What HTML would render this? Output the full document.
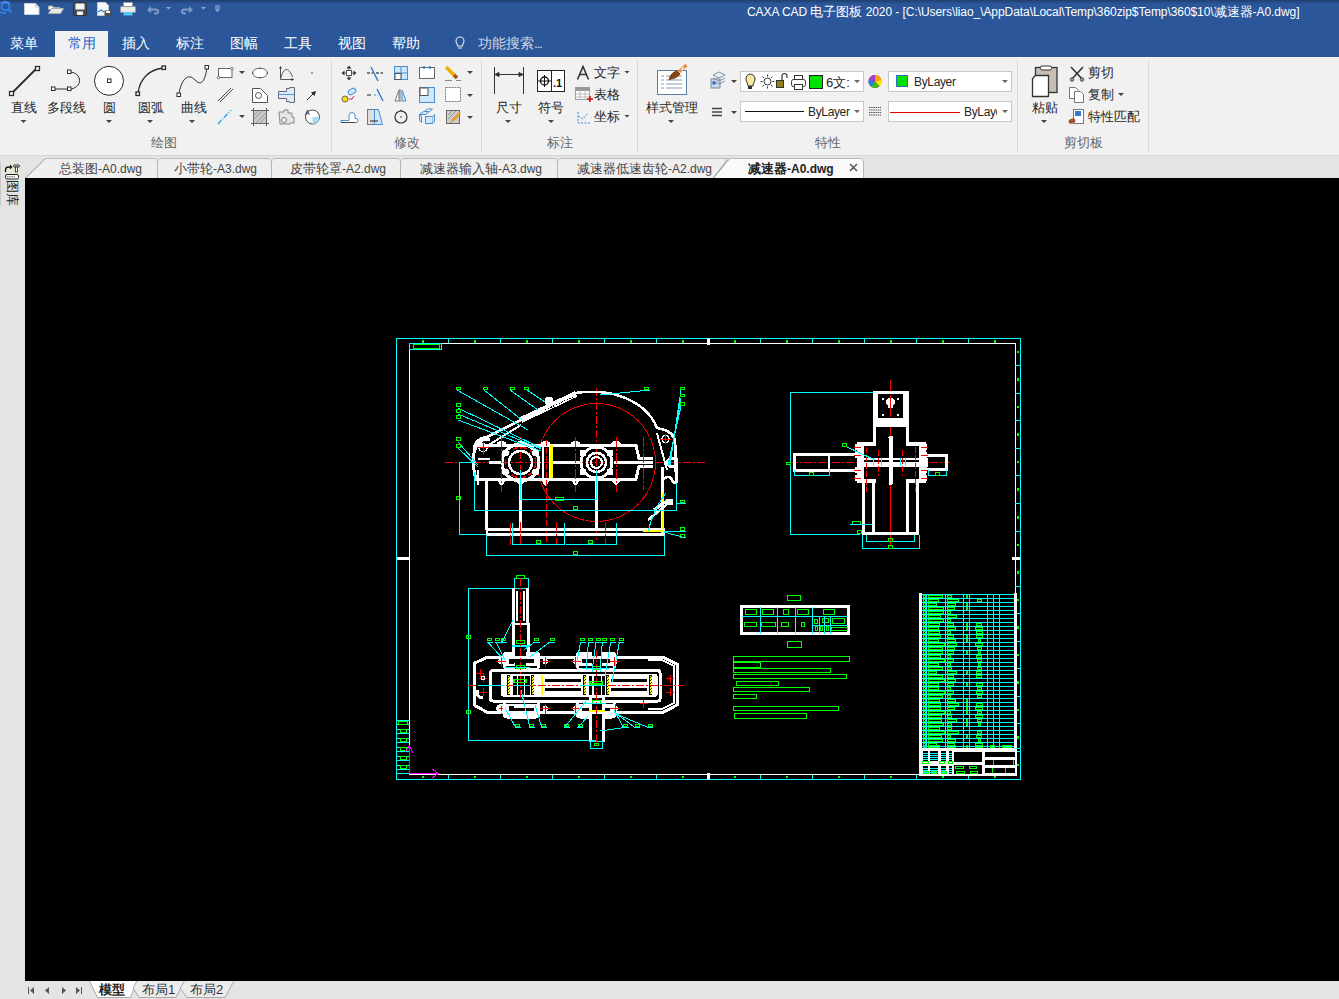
<!DOCTYPE html>
<html><head><meta charset="utf-8">
<style>
*{margin:0;padding:0;box-sizing:border-box}
html,body{width:1339px;height:999px;overflow:hidden;background:#f0f0f0;font-family:"Liberation Sans",sans-serif;}
.a{position:absolute;white-space:nowrap}
#title{left:0;top:0;width:1339px;height:57px;background:#2b579a}
.tt{color:#fff;font-size:13px;line-height:16px}
.tt .l{letter-spacing:-0.07px}
.rt{color:#fff;font-size:13.5px;line-height:16px}
#ribbon{left:0;top:57px;width:1339px;height:98px;background:#f1f1f1}
.lbl{color:#262626;font-size:13px;line-height:15px}
.glbl{color:#666;font-size:13px;line-height:15px}
.sep{width:1px;background:#d9d9d9;top:60px;height:92px}
.dd{width:0;height:0;border-left:3px solid transparent;border-right:3px solid transparent;border-top:3px solid #444}
#tabrow{left:0;top:155px;width:1339px;height:23px;background:#e4e4e4}
#left{left:0;top:178px;width:25px;height:821px;background:#e4e4e4}
#canvas{left:25px;top:178px;width:1314px;height:803px;background:#000}
#bottom{left:25px;top:981px;width:1314px;height:18px;background:#e4e4e4}
.by{font-size:12px;letter-spacing:-0.35px}
.l{font-size:12px}
.tab{color:#444;font-size:13px;line-height:15px}
</style></head><body>
<div id="title" class="a"></div>
<div class="a" style="left:0;top:0;width:1339px;height:4px;background:linear-gradient(#1f3f6e,rgba(43,87,154,0))"></div>
<div class="a tt" style="left:747px;top:4px"><span class="l">CAXA CAD </span>电子图板<span class="l"> 2020 - [C:\Users\liao_\AppData\Local\Temp\360zip$Temp\360$10\</span>减速器<span class="l">-A0.dwg]</span></div>

<svg class="a" style="left:0;top:0" width="560" height="57" viewBox="0 0 560 57">
 <g>
  <circle cx="5.5" cy="6.5" r="4" fill="none" stroke="#2f7fe8" stroke-width="2"/>
  <path d="M8.5,9.5 l3,3" stroke="#2f7fe8" stroke-width="2"/>
  <path d="M0,3 q5,-3 10,0 M0,12 q3,2 6,1" stroke="#4aa0ff" stroke-width="1" fill="none"/>
 </g>
 <path d="M24.5,3.5 h11 l3.5,3.5 v7.5 h-14.5z" fill="#fff" stroke="#c8ccd4"/>
 <path d="M35.5,3.5 v3.5 h3.5" fill="#d8dbe0" stroke="#c8ccd4"/>
 <path d="M48.5,6 h4 l1,1.5 h6 v2 h-11z" fill="#f4f4f4" stroke="#aaa"/>
 <path d="M48.5,13.5 l3,-5 h12 l-3,5z" fill="#e8e8e8" stroke="#aaa"/>
 <rect x="73.5" y="2.5" width="13" height="13" rx="1.5" fill="#4a4f57" stroke="#333"/>
 <rect x="75.5" y="3.5" width="9" height="6" fill="#f4f4f4"/>
 <rect x="77" y="11.5" width="6" height="3.5" fill="#f4f4f4"/>
 <path d="M97.5,2.5 h8 l3,3 v10 h-11z" fill="#f4f6f8" stroke="#c8ccd4"/>
 <path d="M98,12 l3,-2 l3,2" stroke="#3b7fd0" fill="none" stroke-width="1.2"/>
 <rect x="104.5" y="10.5" width="7" height="6" fill="#4a4f57"/>
 <rect x="106" y="11" width="4" height="2" fill="#f4f4f4"/>
 <rect x="123.5" y="2.5" width="9" height="4" fill="#fff" stroke="#999"/>
 <rect x="120.5" y="6.5" width="15" height="6" rx="1" fill="#e8e8e8" stroke="#999"/>
 <rect x="123.5" y="12" width="9" height="3.5" fill="#55c8f0"/>
 <path d="M147,10 l4,-4 v2.5 h5 a3,3 0 0 1 0,6 h-2 v-2 h2 a1,1 0 0 0 0,-2 h-5 v2.5z" fill="#7f9cc8"/>
 <path d="M166,7 h5 l-2.5,2.5z M201,7 h5 l-2.5,2.5z" fill="#8fa6c8"/>
 <path d="M193,10 l-4,-4 v2.5 h-5 a3,3 0 0 0 0,6 h2 v-2 h-2 a1,1 0 0 1 0,-2 h5 v2.5z" fill="#7f9cc8"/>
 <path d="M215,6 h5 M215,8 h5" stroke="#a8b8d0"/><path d="M215,9.5 h5 l-2.5,2.5z" fill="#a8b8d0"/>
 <path d="M460,37 a4,4 0 0 1 4,4 c0,2 -1.5,3 -1.5,5 h-5 c0,-2 -1.5,-3 -1.5,-5 a4,4 0 0 1 4,-4z" fill="none" stroke="#dfe6f0" stroke-width="1.1"/>
 <path d="M458,48 h4" stroke="#dfe6f0" stroke-width="1.1"/>
</svg>
<!-- ribbon tabs -->
<div class="a" style="left:55px;top:31px;width:53px;height:26px;background:#f1f1f1"></div>
<div class="a rt" style="left:10px;top:36px">菜单</div>
<div class="a rt" style="left:68px;top:36px;color:#1f63c6">常用</div>
<div class="a rt" style="left:122px;top:36px">插入</div>
<div class="a rt" style="left:176px;top:36px">标注</div>
<div class="a rt" style="left:230px;top:36px">图幅</div>
<div class="a rt" style="left:284px;top:36px">工具</div>
<div class="a rt" style="left:338px;top:36px">视图</div>
<div class="a rt" style="left:392px;top:36px">帮助</div>
<div class="a rt" style="left:478px;top:36px;color:#cfd6e3">功能搜索<span style="letter-spacing:-1.3px">...</span></div>

<div id="ribbon" class="a"></div>
<div class="a" style="left:0;top:155px;width:1339px;height:1px;background:#d4d4d4"></div>
<!-- ribbon content -->
<div class="a sep" style="left:331px"></div>
<div class="a sep" style="left:481px"></div>
<div class="a sep" style="left:637px"></div>
<div class="a sep" style="left:1017px"></div>
<div class="a sep" style="left:1148px"></div>
<svg class="a" style="left:0;top:0" width="1339" height="155" viewBox="0 0 1339 155">
<g fill="#fff" stroke="#2b2b2b" stroke-width="1">
 <!-- line -->
 <line x1="12" y1="93" x2="36" y2="69" stroke-width="1.8"/>
 <rect x="9.5" y="91.5" width="4" height="4" stroke-width="1.3"/>
 <rect x="35.5" y="66.5" width="4" height="4" stroke-width="1.3"/>
 <!-- polyline -->
 <line x1="54" y1="89" x2="68" y2="89"/>
 <path d="M69,72 C83,72 83,89 69,89" fill="none"/>
 <rect x="51.5" y="87" width="3.5" height="3.5"/>
 <rect x="67.5" y="87" width="3.5" height="3.5"/>
 <rect x="67.5" y="70" width="3.5" height="3.5"/>
 <!-- circle -->
 <circle cx="109" cy="80.8" r="14.5"/>
 <rect x="107.5" y="79" width="3.5" height="3.5"/>
 <!-- arc -->
 <path d="M138,93 C140,78 150,69 164,68" fill="none" stroke-width="1.3"/>
 <rect x="136" y="92" width="3.5" height="3.5" stroke-width="1.3"/>
 <rect x="162" y="66" width="3.5" height="3.5" stroke-width="1.3"/>
 <!-- spline -->
 <path d="M179,94 C181,80 188,72 195,80 C202,87 205,80 207,68" fill="none"/>
 <rect x="177" y="93" width="3.5" height="3.5"/>
 <rect x="205" y="65.5" width="3.5" height="3.5"/>
</g>
<g fill="#444">
 <path d="M20.5,120 h6 l-3,3z M106,120 h6 l-3,3z M147,120 h6 l-3,3z M189,120 h6 l-3,3z"/>
 <path d="M239,71 h6 l-3,3z M239,115 h6 l-3,3z"/>
</g>
<!-- small draw icons -->
<g fill="#fff" stroke="#555" stroke-width="1">
 <rect x="218.5" y="68.5" width="13.5" height="9" stroke="#666"/>
 <circle cx="218.5" cy="77.5" r="1.3" stroke="#555" stroke-width="0.8"/>
 <circle cx="232" cy="68.5" r="1.3" stroke="#555" stroke-width="0.8"/>
 <ellipse cx="260" cy="73" rx="7.5" ry="4.8" stroke="#666"/>
 <path d="M252.5,73 h1 M266.5,73 h1 M260,68 v1 M260,77 v1" stroke="#333" stroke-width="1.2"/>
 <path d="M280.5,67 v12.5 h13" fill="none" stroke="#555"/>
 <path d="M280.5,66 l-1.5,2.5 h3z M294,79.5 l-2.5,-1.5 v3z" fill="#333" stroke="none"/>
 <path d="M280.5,79 C282,73 284,69.5 286.5,69.5 C289,69.5 291,73 292.5,77" fill="none" stroke="#555"/>
 <circle cx="312" cy="73" r="0.8" fill="#333" stroke="none"/>
 <path d="M218,101 L231,88 M220,102 L233,89" stroke="#444" fill="none"/>
 <path d="M252.5,88.5 h8 l7,7 v7 h-15z"/>
 <circle cx="258.5" cy="95.5" r="3"/>
 <path d="M278.5,91.5 h8 v-3 h3 v-1 h5 v15 h-5 v-1 h-3 v-3 h-8z" fill="#dfeaf5" stroke="#667"/>
 <line x1="278" y1="94.5" x2="294" y2="94.5" stroke="#4a9de0"/>
 <path d="M307,100 L314,93" stroke="#333"/>
 <path d="M316,91 l-5,1.5 l3.5,3.5z" fill="#222" stroke="none"/>
 <path d="M218,124 L231,110" stroke="#3aa9e8" stroke-width="1.5" stroke-dasharray="5 1.5 1 1.5"/>
 <rect x="253.5" y="110.5" width="13" height="13" fill="#c8c8c8" stroke="#666"/>
 <path d="M251,110.5 h2 M251,123.5 h2 M267,110.5 h2 M267,123.5 h2 M253.5,108 v2 M266.5,108 v2 M253.5,124 v2 M266.5,124 v2" stroke="#555"/>
 <path d="M254,115 l4,-4 M254,119 l8,-8 M256,123 l10,-10 M260,123 l6,-6" stroke="#999"/>
 <path d="M279,112 h5 v-2 h4 v3 h4 v4 h2 v6 h-4 v1 h-10z" fill="#e4e6ec" stroke="#888"/>
 <circle cx="284" cy="120" r="2.5" fill="#fff" stroke="#777"/>
 <circle cx="312.5" cy="117" r="7" fill="#fff" stroke="#444"/>
 <path d="M312.5,117 h7 a7,7 0 0 1 -7,7z" fill="#a8d8f4" stroke="none"/>
 <text x="305" y="115" font-size="7" fill="#222" stroke="none" font-family="Liberation Sans">A</text>
</g>
<!-- modify icons -->
<g stroke="#444" fill="none">
 <path d="M343,73 h12 M349,67 v12" stroke="#666"/>
 <path d="M341.5,73 l3,-2.5 v5z M356.5,73 l-3,-2.5 v5z M349,65.5 l-2.5,3 h5z M349,80.5 l-2.5,-3 h5z" fill="#333" stroke="none"/>
 <rect x="346.5" y="70.5" width="5" height="5" fill="#fff" stroke="#555"/>
 <path d="M367,73 h6 M376,73 h7" stroke="#555" stroke-width="1.5" stroke-dasharray="3 1.5"/>
 <path d="M371,67 L378,81" stroke="#1f6fc8" stroke-width="1.3"/>
 <rect x="394.5" y="66.5" width="13" height="13" fill="#cde8fb" stroke="#4a90d0"/>
 <path d="M401,66 v14 M394,73 h14" stroke="#4a90d0"/>
 <rect x="395" y="73.5" width="6" height="6" fill="#fff" stroke="#555"/>
 <rect x="419.5" y="67.5" width="15" height="11" fill="#fff" stroke="#666"/>
 <circle cx="424" cy="67.5" r="1.2" fill="#1f6fc8" stroke="none"/>
 <circle cx="430" cy="67.5" r="1.2" fill="#1f6fc8" stroke="none"/>
 <path d="M446,67 L456,77" stroke="#f0b000" stroke-width="3.5"/>
 <path d="M454,75 l3,3" stroke="#a0522d" stroke-width="3.5"/>
 <path d="M445,80.5 h7 M456,80.5 h5" stroke="#888"/>
 <path d="M467,71 h6 l-3,3z" fill="#444" stroke="none"/>
 <circle cx="345" cy="99" r="3" fill="#ffe000" stroke="#666"/>
 <rect x="348" y="89" width="8" height="5" rx="2.5" fill="#cde8fb" stroke="#4a90d0" transform="rotate(-30 352 91.5)"/>
 <path d="M349,99 h3 l2,-3" stroke="#c03030"/>
 <path d="M367,95 h4" stroke="#666" stroke-width="1.5"/>
 <path d="M374,95 h4" stroke="#4a90d0" stroke-width="1.2" stroke-dasharray="2 1.5"/>
 <path d="M377,89 L383,101" stroke="#1f6fc8" stroke-width="1.3"/>
 <path d="M400,89 v13 M399,90 l-4,11 h4z" fill="#fff" stroke="#777"/>
 <path d="M402,90 l4,11 h-4z" fill="#cde8fb" stroke="#4a90d0"/>
 <rect x="419.5" y="87.5" width="15" height="15" fill="#cde8fb" stroke="#4a90d0"/>
 <rect x="420" y="88" width="8" height="7.5" fill="#fff" stroke="#555"/>
 <rect x="445.5" y="87.5" width="15" height="14" fill="#fff" stroke="#777" stroke-dasharray="2 1"/>
 <path d="M467,94 h6 l-3,3z" fill="#444" stroke="none"/>
 <path d="M341,120.5 h8 v-5 a3,3 0 0 1 6,0 v3 h1 a2,2 0 0 1 0,4 h-15z" fill="#fff" stroke="#4a90d0"/>
 <path d="M341,122.5 h14" stroke="#444"/>
 <rect x="367.5" y="109.5" width="7" height="15" fill="#ddd" stroke="#777"/>
 <path d="M374.5,109.5 h4 l4,15 h-8z" fill="#cde8fb" stroke="#4a90d0"/>
 <path d="M370,121 h8" stroke="#222"/>
 <circle cx="401" cy="117" r="6" stroke="#333" stroke-width="1.2"/>
 <circle cx="401" cy="117" r="0.8" fill="#333" stroke="none"/>
 <path d="M400,110 l3,1.5" stroke="#333"/>
 <path d="M419.5,114.5 l4,-3 h6 l-4,3z M419.5,114.5 v6 l2,2 v-6z M425.5,114.5 h-6" fill="#cde8fb" stroke="#4a90d0"/>
 <path d="M424.5,111.5 l3,-2.5 h5 l-3,2.5z" fill="#fff" stroke="#4a90d0"/>
 <rect x="425.5" y="116.5" width="7" height="7" fill="#cde8fb" stroke="#4a90d0"/>
 <path d="M432.5,116.5 l2,-2 v7 l-2,2" fill="#cde8fb" stroke="#4a90d0"/>
 <rect x="446.5" y="110.5" width="13" height="13" fill="#ccc" stroke="#666"/>
 <path d="M448,115 l4,-4 M448,119 l8,-8 M450,123 l9,-9" stroke="#999"/>
 <path d="M452,121 L460,113" stroke="#e89a20" stroke-width="2.5"/>
 <path d="M467,116 h6 l-3,3z" fill="#444" stroke="none"/>
</g>
<!-- dim icons -->
<g stroke="#333" fill="none">
 <path d="M494.5,67 v27 M523.5,67 v27 M495,74.5 h28" stroke="#333"/>
 <path d="M495,74.5 l4,-2 v4z M523,74.5 l-4,-2 v4z" fill="#333"/>
 <rect x="537.5" y="70.5" width="27" height="21" fill="#fff" stroke="#222"/>
 <path d="M551.5,70.5 v21" stroke="#222"/>
 <circle cx="544.5" cy="81" r="4" stroke="#111" stroke-width="1.3"/>
 <path d="M538,81 h13 M544.5,75 v12" stroke="#111"/>
 <text x="553" y="86.5" font-size="11" font-weight="bold" fill="#111" stroke="none" font-family="Liberation Sans">.1</text>
 <path d="M577.5,79.5 L583,66.5 L588.5,79.5 M579.5,74.5 h7" stroke="#333" stroke-width="1.6" fill="none"/>
 <path d="M624.5,71 h5 l-2.5,2.5z M624.5,115 h5 l-2.5,2.5z" fill="#444" stroke="none"/>
 <rect x="575.5" y="87.5" width="14" height="12" fill="#fff" stroke="#999"/>
 <rect x="575.5" y="87.5" width="14" height="3" fill="#999" stroke="#999"/>
 <path d="M575,94 h15 M575,97 h15 M580,90 v10 M585,90 v10" stroke="#bbb"/>
 <path d="M587,99 h6 M590,96 v6" stroke="#d01010" stroke-width="1.6"/>
 <path d="M578,112 v11 h12 M578,116 l5,3 l5,-6" stroke="#3a8ad8" stroke-dasharray="2 1.5"/>
 <rect x="657.5" y="70.5" width="29" height="24" fill="#fff" stroke="#5a7da8"/>
 <path d="M661,76 h3 M661,80 h3 M661,84 h3 M661,88 h3 M666,76 h16 M666,80 h16 M666,84 h16 M666,88 h16" stroke="#8a9ab0"/>
 <path d="M669,79.5 C670,75 673,72 677,71 L680,74 C678,77 674,79 669,79.5z" fill="#8b4513" stroke="#6b3410" stroke-width="0.8"/>
 <path d="M679,72 L686.5,65" stroke="#e8903a" stroke-width="3.2"/>
 <path d="M681.5,70 L684,67.5" stroke="#f0e0d0" stroke-width="2.2"/>
</g>
<g fill="#444"><path d="M505,120 h6 l-3,3z M548,120 h6 l-3,3z M668,120 h6 l-3,3z"/></g>
<!-- property group -->
<g>
 <rect x="711" y="79" width="9" height="9" fill="#cfd8e8" stroke="#7a8aa8"/>
 <path d="M713,75 l6,-3 l6,3 l-6,3z M713,78 l6,3 l6,-3 M713,81 l6,3 l6,-3" fill="none" stroke="#8090a8"/>
 <circle cx="714" cy="83" r="1.8" fill="#3070c0"/>
 <path d="M731,80 h6 l-3,3z M731,111 h6 l-3,3z" fill="#444"/>
 <rect x="740.5" y="71.5" width="123" height="20" fill="#fff" stroke="#c8c8c8"/>
 <rect x="888.5" y="71.5" width="123" height="20" fill="#fff" stroke="#c8c8c8"/>
 <rect x="740.5" y="101.5" width="123" height="20" fill="#fff" stroke="#c8c8c8"/>
 <rect x="888.5" y="101.5" width="123" height="20" fill="#fff" stroke="#c8c8c8"/>
 <path d="M854,80 h6 l-3,3z M1002,80 h6 l-3,3z M854,110 h6 l-3,3z M1002,110 h6 l-3,3z" fill="#666"/>
 <path d="M750,74 a5,5 0 0 1 5,5 c0,3 -2,4 -2,7 h-5 c0,-3 -2,-4 -2,-7 a5,5 0 0 1 4,-5z" fill="#f8e7a0" stroke="#333"/>
 <rect x="748" y="86" width="4" height="3" fill="#333"/>
 <circle cx="767.5" cy="81.5" r="3.5" fill="#fff" stroke="#333"/>
 <path d="M767.5,74.5 v2 M767.5,86.5 v2 M760.5,81.5 h2 M772.5,81.5 h2 M762.5,76.5 l1.5,1.5 M771,85 l1.5,1.5 M762.5,86.5 l1.5,-1.5 M771,78 l1.5,-1.5" stroke="#333"/>
 <rect x="776" y="80" width="8" height="8" fill="#333"/>
 <path d="M777,82 h6 M777,84 h6 M777,86 h6" stroke="#f0d000"/>
 <path d="M782,80 v-4 a2.5,2.5 0 0 1 5,0 v2" fill="none" stroke="#333" stroke-width="1.2"/>
 <rect x="791.5" y="79.5" width="14" height="7" rx="2" fill="#fff" stroke="#333"/>
 <rect x="794.5" y="75.5" width="8" height="4" fill="#fff" stroke="#333"/>
 <rect x="794.5" y="84.5" width="8" height="5" fill="#fff" stroke="#333"/>
 <rect x="809.5" y="75.5" width="13" height="13" fill="#00e000" stroke="#222"/>
 <circle cx="875" cy="81.5" r="6.5" fill="#f00"/>
 <path d="M875,81.5 L875,75 A6.5,6.5 0 0 1 881.2,79.5z" fill="#ff9f00"/>
 <path d="M875,81.5 L881.2,79.5 A6.5,6.5 0 0 1 879.5,86.2z" fill="#ffe800"/>
 <path d="M875,81.5 L879.5,86.2 A6.5,6.5 0 0 1 870.5,86.2z" fill="#30c030"/>
 <path d="M875,81.5 L870.5,86.2 A6.5,6.5 0 0 1 868.8,79.5z" fill="#2080f0"/>
 <path d="M875,81.5 L868.8,79.5 A6.5,6.5 0 0 1 875,75z" fill="#a040d0"/>
 <rect x="896.5" y="75.5" width="11" height="11" fill="#00e000" stroke="#3070c0"/>
 <path d="M712,108.5 h10 M712,112 h10 M712,115.5 h10" stroke="#444" stroke-width="1.3"/>
 <path d="M745,111.5 h59" stroke="#111" stroke-width="1.2"/>
 <path d="M869,107.5 h12 M869,110 h12 M869,112.5 h12 M869,115 h12" stroke="#555" stroke-dasharray="1.5 0.7"/>
 <path d="M890,112.5 h70" stroke="#e00000" stroke-width="1"/>
</g>
<!-- clipboard -->
<g>
 <rect x="1035.5" y="67.5" width="21.5" height="25" fill="#c8bfb4" stroke="#333" stroke-width="1.3"/>
 <rect x="1040.5" y="66" width="11" height="4" rx="1.5" fill="#fff" stroke="#333"/>
 <path d="M1035.5,75.5 h13 v21 h-16 v-18z" fill="#fff" stroke="#333" stroke-width="1.3"/>
 <path d="M1041,120 h6 l-3,3z M1118,93 h6 l-3,3z" fill="#444"/>
 <path d="M1071,67 L1083,80 M1083,67 L1071,80" stroke="#333" stroke-width="1.6"/>
 <circle cx="1072" cy="79.5" r="1.8" fill="#999" stroke="#555"/>
 <circle cx="1082" cy="79.5" r="1.8" fill="#999" stroke="#555"/>
 <path d="M1069.5,87.5 h6 l3,3 v8 h-9z" fill="#fff" stroke="#777"/>
 <path d="M1074.5,91.5 h6 l3,3 v8 h-9z" fill="#fff" stroke="#777"/>
 <rect x="1073.5" y="109.5" width="10" height="14" fill="#fff" stroke="#777"/>
 <rect x="1075" y="111" width="6" height="5" fill="#3a7ad0"/>
 <ellipse cx="1072" cy="121" rx="3.5" ry="2.5" fill="#a0522d" transform="rotate(-20 1072 121)"/>
</g>
</svg>
<div class="a lbl" style="left:11px;top:100px">直线</div>
<div class="a lbl" style="left:47px;top:100px">多段线</div>
<div class="a lbl" style="left:102.5px;top:100px">圆</div>
<div class="a lbl" style="left:138px;top:100px">圆弧</div>
<div class="a lbl" style="left:180.5px;top:100px">曲线</div>
<div class="a glbl" style="left:151px;top:135px">绘图</div>
<div class="a glbl" style="left:394px;top:135px">修改</div>
<div class="a lbl" style="left:495.5px;top:100px">尺寸</div>
<div class="a lbl" style="left:537.5px;top:100px">符号</div>
<div class="a lbl" style="left:594px;top:65px">文字</div>
<div class="a lbl" style="left:594px;top:87px">表格</div>
<div class="a lbl" style="left:594px;top:109px">坐标</div>
<div class="a glbl" style="left:547px;top:135px">标注</div>
<div class="a lbl" style="left:645.5px;top:100px">样式管理</div>
<div class="a lbl" style="left:826px;top:74.5px;font-size:13px">6文:</div>
<div class="a lbl by" style="left:914px;top:74.5px">ByLayer</div>
<div class="a lbl by" style="left:808px;top:104.5px">ByLayer</div>
<div class="a lbl by" style="left:964px;top:104.5px;width:33px;overflow:hidden">ByLayer</div>
<div class="a glbl" style="left:815px;top:135px">特性</div>
<div class="a lbl" style="left:1031.5px;top:100px">粘贴</div>
<div class="a lbl" style="left:1088px;top:65px">剪切</div>
<div class="a lbl" style="left:1088px;top:87px">复制</div>
<div class="a lbl" style="left:1088px;top:109px">特性匹配</div>
<div class="a glbl" style="left:1064px;top:135px">剪切板</div>


<div id="tabrow" class="a"></div>
<div id="left" class="a"></div>
<div id="canvas" class="a"></div>
<div id="bottom" class="a"></div>
<!--DRAWING-->
<svg class="a" style="left:0;top:0" width="1339" height="999" viewBox="0 0 1339 999" shape-rendering="crispEdges">
<rect x="396.5" y="338.5" width="624" height="441" stroke="#00ffff" stroke-width="1" fill="none" />
<rect x="409.5" y="343.5" width="606" height="431" stroke="#ffffff" stroke-width="1.3" fill="none" />
<rect x="409.5" y="343.5" width="31.5" height="6" stroke="#00ffff" stroke-width="1" fill="none" />
<rect x="413.5" y="344.5" width="26" height="4" stroke="#00ff00" stroke-width="1.3" fill="none" />
<line x1="448.5" y1="339" x2="448.5" y2="343" stroke="#00ffff" stroke-width="1" />
<line x1="448.5" y1="775" x2="448.5" y2="779" stroke="#00ffff" stroke-width="1" />
<line x1="500.5" y1="339" x2="500.5" y2="343" stroke="#00ffff" stroke-width="1" />
<line x1="500.5" y1="775" x2="500.5" y2="779" stroke="#00ffff" stroke-width="1" />
<line x1="552.5" y1="339" x2="552.5" y2="343" stroke="#00ffff" stroke-width="1" />
<line x1="552.5" y1="775" x2="552.5" y2="779" stroke="#00ffff" stroke-width="1" />
<line x1="604.5" y1="339" x2="604.5" y2="343" stroke="#00ffff" stroke-width="1" />
<line x1="604.5" y1="775" x2="604.5" y2="779" stroke="#00ffff" stroke-width="1" />
<line x1="656.5" y1="339" x2="656.5" y2="343" stroke="#00ffff" stroke-width="1" />
<line x1="656.5" y1="775" x2="656.5" y2="779" stroke="#00ffff" stroke-width="1" />
<rect x="707" y="338" width="3" height="7" fill="#ffffff"/>
<rect x="707" y="773" width="3" height="7" fill="#ffffff"/>
<line x1="760.5" y1="339" x2="760.5" y2="343" stroke="#00ffff" stroke-width="1" />
<line x1="760.5" y1="775" x2="760.5" y2="779" stroke="#00ffff" stroke-width="1" />
<line x1="812.5" y1="339" x2="812.5" y2="343" stroke="#00ffff" stroke-width="1" />
<line x1="812.5" y1="775" x2="812.5" y2="779" stroke="#00ffff" stroke-width="1" />
<line x1="864.5" y1="339" x2="864.5" y2="343" stroke="#00ffff" stroke-width="1" />
<line x1="864.5" y1="775" x2="864.5" y2="779" stroke="#00ffff" stroke-width="1" />
<line x1="916.5" y1="339" x2="916.5" y2="343" stroke="#00ffff" stroke-width="1" />
<line x1="916.5" y1="775" x2="916.5" y2="779" stroke="#00ffff" stroke-width="1" />
<line x1="968.5" y1="339" x2="968.5" y2="343" stroke="#00ffff" stroke-width="1" />
<line x1="968.5" y1="775" x2="968.5" y2="779" stroke="#00ffff" stroke-width="1" />
<rect x="422.0" y="340" width="1.5" height="2.5" fill="#00ff00"/>
<rect x="422.0" y="775.5" width="1.5" height="2.5" fill="#00ff00"/>
<rect x="474.0" y="340" width="1.5" height="2.5" fill="#00ff00"/>
<rect x="474.0" y="775.5" width="1.5" height="2.5" fill="#00ff00"/>
<rect x="526.0" y="340" width="1.5" height="2.5" fill="#00ff00"/>
<rect x="526.0" y="775.5" width="1.5" height="2.5" fill="#00ff00"/>
<rect x="578.0" y="340" width="1.5" height="2.5" fill="#00ff00"/>
<rect x="578.0" y="775.5" width="1.5" height="2.5" fill="#00ff00"/>
<rect x="630.0" y="340" width="1.5" height="2.5" fill="#00ff00"/>
<rect x="630.0" y="775.5" width="1.5" height="2.5" fill="#00ff00"/>
<rect x="682.0" y="340" width="1.5" height="2.5" fill="#00ff00"/>
<rect x="682.0" y="775.5" width="1.5" height="2.5" fill="#00ff00"/>
<rect x="734.0" y="340" width="1.5" height="2.5" fill="#00ff00"/>
<rect x="734.0" y="775.5" width="1.5" height="2.5" fill="#00ff00"/>
<rect x="786.0" y="340" width="1.5" height="2.5" fill="#00ff00"/>
<rect x="786.0" y="775.5" width="1.5" height="2.5" fill="#00ff00"/>
<rect x="838.0" y="340" width="1.5" height="2.5" fill="#00ff00"/>
<rect x="838.0" y="775.5" width="1.5" height="2.5" fill="#00ff00"/>
<rect x="890.0" y="340" width="1.5" height="2.5" fill="#00ff00"/>
<rect x="890.0" y="775.5" width="1.5" height="2.5" fill="#00ff00"/>
<rect x="942.0" y="340" width="1.5" height="2.5" fill="#00ff00"/>
<rect x="942.0" y="775.5" width="1.5" height="2.5" fill="#00ff00"/>
<rect x="994.0" y="340" width="1.5" height="2.5" fill="#00ff00"/>
<rect x="994.0" y="775.5" width="1.5" height="2.5" fill="#00ff00"/>
<line x1="1015" y1="365.7" x2="1020" y2="365.7" stroke="#00ffff" stroke-width="1" />
<line x1="1015" y1="393.25" x2="1020" y2="393.25" stroke="#00ffff" stroke-width="1" />
<line x1="1015" y1="420.8" x2="1020" y2="420.8" stroke="#00ffff" stroke-width="1" />
<line x1="1015" y1="448.35" x2="1020" y2="448.35" stroke="#00ffff" stroke-width="1" />
<line x1="1015" y1="475.9" x2="1020" y2="475.9" stroke="#00ffff" stroke-width="1" />
<line x1="1015" y1="503.45" x2="1020" y2="503.45" stroke="#00ffff" stroke-width="1" />
<line x1="1015" y1="531.0" x2="1020" y2="531.0" stroke="#00ffff" stroke-width="1" />
<line x1="1015" y1="586.1" x2="1020" y2="586.1" stroke="#00ffff" stroke-width="1" />
<line x1="1015" y1="613.65" x2="1020" y2="613.65" stroke="#00ffff" stroke-width="1" />
<line x1="1015" y1="641.2" x2="1020" y2="641.2" stroke="#00ffff" stroke-width="1" />
<line x1="1015" y1="668.75" x2="1020" y2="668.75" stroke="#00ffff" stroke-width="1" />
<line x1="1015" y1="696.3" x2="1020" y2="696.3" stroke="#00ffff" stroke-width="1" />
<line x1="1015" y1="723.85" x2="1020" y2="723.85" stroke="#00ffff" stroke-width="1" />
<line x1="1015" y1="751.4" x2="1020" y2="751.4" stroke="#00ffff" stroke-width="1" />
<rect x="1017" y="350.7" width="1.5" height="2.5" fill="#00ff00"/>
<rect x="1017" y="378.25" width="1.5" height="2.5" fill="#00ff00"/>
<rect x="1017" y="405.8" width="1.5" height="2.5" fill="#00ff00"/>
<rect x="1017" y="433.35" width="1.5" height="2.5" fill="#00ff00"/>
<rect x="1017" y="460.9" width="1.5" height="2.5" fill="#00ff00"/>
<rect x="1017" y="488.45" width="1.5" height="2.5" fill="#00ff00"/>
<rect x="1017" y="516.0" width="1.5" height="2.5" fill="#00ff00"/>
<rect x="1017" y="543.55" width="1.5" height="2.5" fill="#00ff00"/>
<rect x="1017" y="571.1" width="1.5" height="2.5" fill="#00ff00"/>
<rect x="1017" y="598.65" width="1.5" height="2.5" fill="#00ff00"/>
<rect x="1017" y="626.2" width="1.5" height="2.5" fill="#00ff00"/>
<rect x="1017" y="653.75" width="1.5" height="2.5" fill="#00ff00"/>
<rect x="1017" y="681.3" width="1.5" height="2.5" fill="#00ff00"/>
<rect x="1017" y="708.85" width="1.5" height="2.5" fill="#00ff00"/>
<rect x="1017" y="736.4" width="1.5" height="2.5" fill="#00ff00"/>
<rect x="1017" y="763.95" width="1.5" height="2.5" fill="#00ff00"/>
<rect x="1012" y="557" width="8" height="3" fill="#ffffff"/>
<rect x="397" y="557" width="12" height="3" fill="#ffffff"/>
<line x1="397" y1="720.5" x2="409.5" y2="720.5" stroke="#00ffff" stroke-width="1" />
<line x1="397" y1="724.5" x2="409.5" y2="724.5" stroke="#00ffff" stroke-width="1" />
<rect x="398.5" y="721.0" width="9" height="3" stroke="#00ff00" stroke-width="1" fill="none" />
<line x1="397" y1="729.45" x2="409.5" y2="729.45" stroke="#00ffff" stroke-width="1" />
<line x1="397" y1="733.45" x2="409.5" y2="733.45" stroke="#00ffff" stroke-width="1" />
<rect x="400.5" y="729.95" width="6" height="3" stroke="#00ff00" stroke-width="1" fill="none" />
<line x1="397" y1="738.4" x2="409.5" y2="738.4" stroke="#00ffff" stroke-width="1" />
<line x1="397" y1="742.4" x2="409.5" y2="742.4" stroke="#00ffff" stroke-width="1" />
<rect x="400.5" y="738.9" width="6" height="3" stroke="#00ff00" stroke-width="1" fill="none" />
<line x1="397" y1="747.35" x2="409.5" y2="747.35" stroke="#00ffff" stroke-width="1" />
<line x1="397" y1="751.35" x2="409.5" y2="751.35" stroke="#00ffff" stroke-width="1" />
<rect x="400.5" y="747.85" width="6" height="3" stroke="#00ff00" stroke-width="1" fill="none" />
<line x1="397" y1="756.3" x2="409.5" y2="756.3" stroke="#00ffff" stroke-width="1" />
<line x1="397" y1="760.3" x2="409.5" y2="760.3" stroke="#00ffff" stroke-width="1" />
<rect x="400.5" y="756.8" width="6" height="3" stroke="#00ff00" stroke-width="1" fill="none" />
<line x1="397" y1="765.25" x2="409.5" y2="765.25" stroke="#00ffff" stroke-width="1" />
<line x1="397" y1="769.25" x2="409.5" y2="769.25" stroke="#00ffff" stroke-width="1" />
<rect x="400.5" y="765.75" width="6" height="3" stroke="#00ff00" stroke-width="1" fill="none" />
<line x1="397" y1="773.5" x2="409.5" y2="773.5" stroke="#00ffff" stroke-width="1" />
<line x1="409.5" y1="773.5" x2="409.5" y2="747" stroke="#ff00ff" stroke-width="1.2" />
<line x1="409.5" y1="773.5" x2="438" y2="773.5" stroke="#ff00ff" stroke-width="1.2" />
<path d="M405,752 L409.5,746 L413,753" stroke="#ff00ff" stroke-width="1" fill="none" />
<path d="M432,769 L438.5,773.5 L432,778" stroke="#ff00ff" stroke-width="1" fill="none" />
<line x1="445" y1="462.5" x2="706" y2="462.5" stroke="#ff0000" stroke-width="1" stroke-dasharray="8 2 2 2"/>
<line x1="596.5" y1="388" x2="596.5" y2="540" stroke="#ff0000" stroke-width="1" stroke-dasharray="8 2 2 2"/>
<line x1="520.5" y1="437" x2="520.5" y2="545" stroke="#ff0000" stroke-width="1" stroke-dasharray="8 2 2 2"/>
<circle cx="596.5" cy="462.5" r="59" stroke="#ff0000" stroke-width="1" fill="none" stroke-dasharray="14 1"/>
<path d="M474,450 C474,441 480,438 487,437 L519,421 L575,393 C590,391 605,391 620,396 C640,403 652,415 657,428 C666,430 673,432 675,440 L676,460" stroke="#ffffff" stroke-width="2.5" fill="none" />
<path d="M487,446 L521,425" stroke="#ffffff" stroke-width="2" fill="none" />
<line x1="521" y1="420" x2="576" y2="394" stroke="#ffffff" stroke-width="6" />
<circle cx="549" cy="401" r="3.5" stroke="#ffffff" stroke-width="2" fill="#ffffff" />
<line x1="545" y1="410" x2="573" y2="397" stroke="#000" stroke-width="1" stroke-dasharray="1.5 1.5"/>
<polyline points="476,445.5 636,445.5 639,458.5 653,458.5" stroke="#ffffff" stroke-width="3" fill="none" />
<polyline points="476,479 636,479 639,466 653,466" stroke="#ffffff" stroke-width="3" fill="none" />
<ellipse cx="501.5" cy="444" rx="5" ry="3" fill="#ffffff"/>
<path d="M496.5,480 L506.5,480 L501.5,486z" fill="#ffffff"/>
<ellipse cx="545.5" cy="444" rx="5" ry="3" fill="#ffffff"/>
<path d="M540.5,480 L550.5,480 L545.5,486z" fill="#ffffff"/>
<ellipse cx="575.5" cy="444" rx="5" ry="3" fill="#ffffff"/>
<path d="M570.5,480 L580.5,480 L575.5,486z" fill="#ffffff"/>
<ellipse cx="616" cy="444" rx="5" ry="3" fill="#ffffff"/>
<path d="M611,480 L621,480 L616,486z" fill="#ffffff"/>
<line x1="489" y1="462.5" x2="501" y2="462.5" stroke="#ffffff" stroke-width="3" />
<line x1="550" y1="462.5" x2="580" y2="462.5" stroke="#ffffff" stroke-width="3" />
<line x1="614" y1="462.5" x2="653" y2="462.5" stroke="#ffffff" stroke-width="3" />
<path d="M476,480 C473,470 472,455 476,447 C480,440 486,438 490,440" stroke="#ffffff" stroke-width="3" fill="none" />
<circle cx="483" cy="447.5" r="4" stroke="#ffffff" stroke-width="1.5" fill="none" />
<line x1="477" y1="447.5" x2="489" y2="447.5" stroke="#ff0000" stroke-width="1" />
<line x1="483" y1="441" x2="483" y2="454" stroke="#ff0000" stroke-width="1" />
<line x1="478" y1="459" x2="490" y2="459" stroke="#ffffff" stroke-width="2" />
<path d="M657,428 C668,430 675,434 675,445 L676,480" stroke="#ffffff" stroke-width="2.5" fill="none" />
<circle cx="665.5" cy="439" r="3.5" stroke="#ffffff" stroke-width="1.5" fill="none" />
<line x1="660" y1="439" x2="671" y2="439" stroke="#ff0000" stroke-width="1" />
<line x1="665.5" y1="434" x2="665.5" y2="444" stroke="#ff0000" stroke-width="1" />
<path d="M657,433 C660,445 663,455 667,470" stroke="#ffffff" stroke-width="2" fill="none" />
<circle cx="672" cy="462.5" r="4.5" stroke="#ffffff" stroke-width="3" fill="none" />
<path d="M663,480 C666,476 670,476 672,480 C674,484 676,484 677,480" stroke="#ffffff" stroke-width="2.5" fill="none" />
<circle cx="520.5" cy="462.5" r="18.5" stroke="#ffffff" stroke-width="3" fill="none" />
<circle cx="520.5" cy="462.5" r="11.5" stroke="#ffffff" stroke-width="2.5" fill="none" />
<circle cx="520.5" cy="462.5" r="15.2" stroke="#ff0000" stroke-width="1.5" fill="none" stroke-dasharray="6 3"/>
<circle cx="505.5" cy="453" r="2.5" stroke="#ffffff" stroke-width="2" fill="#ffffff" />
<circle cx="535.5" cy="453" r="2.5" stroke="#ffffff" stroke-width="2" fill="#ffffff" />
<circle cx="505.5" cy="472" r="2.5" stroke="#ffffff" stroke-width="2" fill="#ffffff" />
<circle cx="535.5" cy="472" r="2.5" stroke="#ffffff" stroke-width="2" fill="#ffffff" />
<circle cx="520.5" cy="444" r="2.5" stroke="#ffffff" stroke-width="2" fill="#ffffff" />
<circle cx="520.5" cy="481" r="2.5" stroke="#ffffff" stroke-width="2" fill="#ffffff" />
<circle cx="596.5" cy="462.5" r="15.5" stroke="#ffffff" stroke-width="3" fill="none" />
<circle cx="596.5" cy="462.5" r="9.5" stroke="#ffffff" stroke-width="2.5" fill="none" />
<circle cx="596.5" cy="462.5" r="5.5" stroke="#ffffff" stroke-width="2" fill="none" />
<circle cx="583" cy="453" r="2.5" stroke="#ffffff" stroke-width="2" fill="#ffffff" />
<circle cx="610" cy="453" r="2.5" stroke="#ffffff" stroke-width="2" fill="#ffffff" />
<circle cx="583" cy="472" r="2.5" stroke="#ffffff" stroke-width="2" fill="#ffffff" />
<circle cx="610" cy="472" r="2.5" stroke="#ffffff" stroke-width="2" fill="#ffffff" />
<line x1="543" y1="445" x2="543" y2="480" stroke="#ffffff" stroke-width="2" />
<line x1="550" y1="445" x2="550" y2="480" stroke="#ffffff" stroke-width="2" />
<line x1="546.5" y1="440" x2="546.5" y2="545" stroke="#ff0000" stroke-width="1" stroke-dasharray="6 2"/>
<line x1="486.5" y1="480" x2="486.5" y2="530" stroke="#ffffff" stroke-width="3" />
<line x1="520.5" y1="480" x2="520.5" y2="530" stroke="#ffffff" stroke-width="3" />
<line x1="596.5" y1="480" x2="596.5" y2="530" stroke="#ffffff" stroke-width="3" />
<line x1="662.5" y1="467" x2="662.5" y2="533" stroke="#ffffff" stroke-width="3" />
<line x1="676.5" y1="458" x2="676.5" y2="483" stroke="#ffffff" stroke-width="2.5" />
<line x1="486" y1="529.5" x2="665" y2="529.5" stroke="#ffffff" stroke-width="3" />
<line x1="486" y1="534.5" x2="665" y2="534.5" stroke="#ffffff" stroke-width="3" />
<line x1="486.5" y1="529" x2="486.5" y2="535" stroke="#ffffff" stroke-width="2" />
<line x1="501.5" y1="437" x2="501.5" y2="492" stroke="#ff0000" stroke-width="1" stroke-dasharray="10 2 2 2"/>
<line x1="575.5" y1="437" x2="575.5" y2="492" stroke="#ff0000" stroke-width="1" stroke-dasharray="10 2 2 2"/>
<line x1="616" y1="437" x2="616" y2="492" stroke="#ff0000" stroke-width="1" stroke-dasharray="10 2 2 2"/>
<line x1="643" y1="437" x2="643" y2="490" stroke="#ff0000" stroke-width="1" stroke-dasharray="10 2 2 2"/>
<line x1="510" y1="523" x2="510" y2="545" stroke="#ff0000" stroke-width="1" stroke-dasharray="10 2 2 2"/>
<line x1="556" y1="522" x2="556" y2="545" stroke="#ff0000" stroke-width="1" stroke-dasharray="10 2 2 2"/>
<line x1="605" y1="522" x2="605" y2="545" stroke="#ff0000" stroke-width="1" stroke-dasharray="10 2 2 2"/>
<line x1="520.5" y1="522" x2="520.5" y2="545" stroke="#ff0000" stroke-width="1" stroke-dasharray="10 2 2 2"/>
<rect x="550" y="445" width="3" height="33" fill="#ffff00"/>
<rect x="662" y="493" width="2" height="36" fill="#ffff00"/>
<rect x="643" y="530" width="20" height="2" fill="#ffff00"/>
<path d="M478,470 L478,485 M474,480 L490,480" stroke="#ffffff" stroke-width="1.5" fill="none" />
<path d="M648,520 L672,500" stroke="#ffffff" stroke-width="2.5" fill="none" />
<circle cx="670" cy="502" r="3.5" stroke="#ffffff" stroke-width="0" fill="#ffffff" />
<line x1="654" y1="510" x2="668" y2="500" stroke="#ffffff" stroke-width="3" />
<line x1="457" y1="390" x2="528" y2="430" stroke="#00ffff" stroke-width="1" />
<line x1="484" y1="390" x2="522" y2="420" stroke="#00ffff" stroke-width="1" />
<line x1="510" y1="390" x2="538" y2="410" stroke="#00ffff" stroke-width="1" />
<line x1="527" y1="390" x2="545" y2="402" stroke="#00ffff" stroke-width="1" />
<line x1="458" y1="408" x2="541" y2="448" stroke="#00ffff" stroke-width="1" />
<line x1="458" y1="414" x2="541" y2="449" stroke="#00ffff" stroke-width="1" />
<line x1="458" y1="420" x2="541" y2="451" stroke="#00ffff" stroke-width="1" />
<line x1="458" y1="442" x2="478" y2="465" stroke="#00ffff" stroke-width="1" />
<line x1="458" y1="448" x2="478" y2="467" stroke="#00ffff" stroke-width="1" />
<line x1="650" y1="390" x2="600" y2="395" stroke="#00ffff" stroke-width="1" />
<line x1="681" y1="390" x2="670" y2="465" stroke="#00ffff" stroke-width="1" />
<line x1="681" y1="398" x2="669" y2="465" stroke="#00ffff" stroke-width="1" />
<line x1="681" y1="406" x2="668" y2="465" stroke="#00ffff" stroke-width="1" />
<rect x="456.5" y="387.25" width="4" height="2.5" stroke="#00ff00" stroke-width="1" fill="none" />
<rect x="483.5" y="387.25" width="4" height="2.5" stroke="#00ff00" stroke-width="1" fill="none" />
<rect x="510.0" y="387.25" width="4" height="2.5" stroke="#00ff00" stroke-width="1" fill="none" />
<rect x="524.5" y="387.25" width="4" height="2.5" stroke="#00ff00" stroke-width="1" fill="none" />
<rect x="456.5" y="403.75" width="4" height="2.5" stroke="#00ff00" stroke-width="1" fill="none" />
<rect x="456.5" y="409.75" width="4" height="2.5" stroke="#00ff00" stroke-width="1" fill="none" />
<rect x="456.5" y="415.75" width="4" height="2.5" stroke="#00ff00" stroke-width="1" fill="none" />
<rect x="456.5" y="437.75" width="4" height="2.5" stroke="#00ff00" stroke-width="1" fill="none" />
<rect x="456.5" y="444.75" width="4" height="2.5" stroke="#00ff00" stroke-width="1" fill="none" />
<rect x="644.0" y="387.25" width="4" height="2.5" stroke="#00ff00" stroke-width="1" fill="none" />
<rect x="680.5" y="387.25" width="4" height="2.5" stroke="#00ff00" stroke-width="1" fill="none" />
<rect x="680.5" y="394.25" width="4" height="2.5" stroke="#00ff00" stroke-width="1" fill="none" />
<rect x="680.5" y="402.75" width="4" height="2.5" stroke="#00ff00" stroke-width="1" fill="none" />
<polyline points="474,462.5 459,462.5 459,534.5 486,534.5" stroke="#00ffff" stroke-width="1" fill="none" />
<rect x="456.0" y="496.75" width="4" height="2.5" stroke="#00ff00" stroke-width="1" fill="none" />
<polyline points="474,472 474,510.5 676,510.5 676,485" stroke="#00ffff" stroke-width="1" fill="none" />
<rect x="573.0" y="506.75" width="4" height="2.5" stroke="#00ff00" stroke-width="1" fill="none" />
<polyline points="520.5,470 520.5,499.5 596.5,499.5 596.5,470" stroke="#00ffff" stroke-width="1" fill="none" />
<rect x="555" y="497" width="8" height="3" stroke="#00ff00" stroke-width="1" fill="none" />
<polyline points="512,523 512,544.5 564,544.5 564,523" stroke="#00ffff" stroke-width="1" fill="none" />
<rect x="536.0" y="540.75" width="4" height="2.5" stroke="#00ff00" stroke-width="1" fill="none" />
<polyline points="566,544.5 616,544.5 616,523" stroke="#00ffff" stroke-width="1" fill="none" />
<rect x="588.0" y="540.75" width="4" height="2.5" stroke="#00ff00" stroke-width="1" fill="none" />
<polyline points="486,535 486,555.5 664,555.5 664,535" stroke="#00ffff" stroke-width="1" fill="none" />
<rect x="573.0" y="551.75" width="4" height="2.5" stroke="#00ff00" stroke-width="1" fill="none" />
<path d="M648,531 C652,515 660,500 666,493" stroke="#00ffff" stroke-width="1" fill="none" />
<rect x="680.5" y="500.25" width="4" height="2.5" stroke="#00ff00" stroke-width="1" fill="none" />
<rect x="680.5" y="527.75" width="4" height="2.5" stroke="#00ff00" stroke-width="1" fill="none" />
<rect x="680.5" y="534.75" width="4" height="2.5" stroke="#00ff00" stroke-width="1" fill="none" />
<line x1="664" y1="531" x2="686" y2="531" stroke="#00ffff" stroke-width="1" />
<line x1="664" y1="532" x2="686" y2="538" stroke="#00ffff" stroke-width="1" />
<line x1="676" y1="503" x2="686" y2="503" stroke="#00ffff" stroke-width="1" />
<line x1="676.5" y1="483" x2="676.5" y2="510" stroke="#00ffff" stroke-width="1" />
<line x1="890.5" y1="380" x2="890.5" y2="545" stroke="#ff0000" stroke-width="1" />
<line x1="790" y1="462.5" x2="950" y2="462.5" stroke="#ff0000" stroke-width="1" stroke-dasharray="8 2 2 2"/>
<polyline points="890,392.5 790,392.5 790,534 860,534" stroke="#00ffff" stroke-width="1" fill="none" />
<rect x="872.5" y="391" width="36.5" height="36" fill="#ffffff"/>
<rect x="878" y="394" width="25" height="24" fill="#000"/>
<circle cx="890.5" cy="402" r="4.5" stroke="#ffffff" stroke-width="0" fill="#ffffff" />
<rect x="888" y="402" width="5" height="5.5" fill="#ffffff"/>
<rect x="882.0" y="398.0" width="1.5" height="1.5" fill="#ffffff"/>
<rect x="897.0" y="398.0" width="1.5" height="1.5" fill="#ffffff"/>
<rect x="882.0" y="414.0" width="1.5" height="1.5" fill="#ffffff"/>
<rect x="897.0" y="414.0" width="1.5" height="1.5" fill="#ffffff"/>
<line x1="890.5" y1="395" x2="890.5" y2="417" stroke="#ff0000" stroke-width="1" />
<rect x="872.5" y="426" width="3" height="19" fill="#ffffff"/>
<rect x="906" y="426" width="3" height="19" fill="#ffffff"/>
<rect x="856.5" y="442" width="19" height="4" fill="#ffffff"/>
<rect x="906" y="442" width="19.5" height="4" fill="#ffffff"/>
<rect x="856.5" y="442" width="7" height="41" fill="#ffffff"/>
<rect x="918.5" y="442" width="7" height="41" fill="#ffffff"/>
<ellipse cx="856.5" cy="447" rx="2" ry="3" fill="#ffffff"/>
<ellipse cx="925.5" cy="447" rx="2" ry="3" fill="#ffffff"/>
<ellipse cx="856.5" cy="455" rx="2" ry="3" fill="#ffffff"/>
<ellipse cx="925.5" cy="455" rx="2" ry="3" fill="#ffffff"/>
<ellipse cx="856.5" cy="470" rx="2" ry="3" fill="#ffffff"/>
<ellipse cx="925.5" cy="470" rx="2" ry="3" fill="#ffffff"/>
<ellipse cx="856.5" cy="478" rx="2" ry="3" fill="#ffffff"/>
<ellipse cx="925.5" cy="478" rx="2" ry="3" fill="#ffffff"/>
<rect x="856.5" y="479" width="19" height="3.5" fill="#ffffff"/>
<rect x="906" y="479" width="19.5" height="3.5" fill="#ffffff"/>
<rect x="863" y="457.5" width="56" height="2.5" fill="#ffffff"/>
<rect x="863" y="462" width="56" height="5" fill="#ffffff"/>
<rect x="888.5" y="437.5" width="4.5" height="46" fill="#ffffff"/>
<ellipse cx="890.7" cy="437.5" rx="2.2" ry="2" fill="#ffffff"/><ellipse cx="890.7" cy="483" rx="2.2" ry="2" fill="#ffffff"/>
<rect x="793" y="453.3" width="63" height="3" fill="#ffffff"/>
<rect x="793" y="468.5" width="63" height="3" fill="#ffffff"/>
<rect x="793" y="453.3" width="3" height="18.2" fill="#ffffff"/>
<rect x="828" y="456" width="2" height="13" fill="#ffffff"/>
<rect x="925" y="454" width="22" height="2.5" fill="#ffffff"/>
<rect x="925" y="468" width="22" height="2.5" fill="#ffffff"/>
<rect x="945" y="454" width="2.5" height="16.5" fill="#ffffff"/>
<rect x="926" y="458" width="2" height="9" fill="#ffffff"/>
<rect x="862" y="482" width="3" height="52" fill="#ffffff"/>
<rect x="871.5" y="482" width="3" height="52" fill="#ffffff"/>
<rect x="906" y="482" width="3" height="52" fill="#ffffff"/>
<rect x="915.5" y="482" width="3" height="52" fill="#ffffff"/>
<rect x="862" y="532" width="57" height="3" fill="#ffffff"/>
<line x1="854" y1="447" x2="861" y2="447" stroke="#ff0000" stroke-width="1" />
<line x1="921" y1="447" x2="928" y2="447" stroke="#ff0000" stroke-width="1" />
<line x1="854" y1="455" x2="861" y2="455" stroke="#ff0000" stroke-width="1" />
<line x1="921" y1="455" x2="928" y2="455" stroke="#ff0000" stroke-width="1" />
<line x1="854" y1="470" x2="861" y2="470" stroke="#ff0000" stroke-width="1" />
<line x1="921" y1="470" x2="928" y2="470" stroke="#ff0000" stroke-width="1" />
<line x1="854" y1="478" x2="861" y2="478" stroke="#ff0000" stroke-width="1" />
<line x1="921" y1="478" x2="928" y2="478" stroke="#ff0000" stroke-width="1" />
<line x1="866.5" y1="447" x2="866.5" y2="492" stroke="#ff0000" stroke-width="1" stroke-dasharray="6 2"/>
<line x1="878" y1="450" x2="878" y2="476" stroke="#ff0000" stroke-width="1" stroke-dasharray="6 2"/>
<line x1="902.5" y1="450" x2="902.5" y2="476" stroke="#ff0000" stroke-width="1" stroke-dasharray="6 2"/>
<line x1="915" y1="447" x2="915" y2="492" stroke="#ff0000" stroke-width="1" stroke-dasharray="6 2"/>
<polyline points="866,535 866,541 914,541 914,535" stroke="#00ffff" stroke-width="1" fill="none" />
<polyline points="862,535 862,548.5 919,548.5 919,535" stroke="#00ffff" stroke-width="1" fill="none" />
<rect x="888.5" y="538.75" width="4" height="2.5" stroke="#00ff00" stroke-width="1" fill="none" />
<rect x="888.5" y="545.75" width="4" height="2.5" stroke="#00ff00" stroke-width="1" fill="none" />
<polyline points="794,470 794,475 829.5,475 829.5,470" stroke="#00ffff" stroke-width="1" fill="none" />
<rect x="809.0" y="472.75" width="4" height="2.5" stroke="#00ff00" stroke-width="1" fill="none" />
<polyline points="928,470 928,475 946,475 946,470" stroke="#00ffff" stroke-width="1" fill="none" />
<rect x="935.0" y="472.75" width="4" height="2.5" stroke="#00ff00" stroke-width="1" fill="none" />
<line x1="873" y1="458" x2="873" y2="466" stroke="#00ffff" stroke-width="1" />
<line x1="881" y1="458" x2="881" y2="466" stroke="#00ffff" stroke-width="1" />
<line x1="900" y1="458" x2="900" y2="466" stroke="#00ffff" stroke-width="1" />
<line x1="905" y1="458" x2="905" y2="466" stroke="#00ffff" stroke-width="1" />
<rect x="786.0" y="462.25" width="4" height="2.5" stroke="#00ff00" stroke-width="1" fill="none" />
<rect x="842.5" y="443.75" width="4" height="2.5" stroke="#00ff00" stroke-width="1" fill="none" />
<line x1="847" y1="447" x2="875" y2="460" stroke="#00ffff" stroke-width="1" />
<rect x="852" y="521" width="8" height="3" stroke="#00ff00" stroke-width="1" fill="none" />
<line x1="850" y1="524" x2="872" y2="524" stroke="#00ffff" stroke-width="1" />
<rect x="857.0" y="530.75" width="4" height="2.5" stroke="#00ff00" stroke-width="1" fill="none" />
<polyline points="520,588.5 468.5,588.5 468.5,740 596,740" stroke="#00ffff" stroke-width="1" fill="none" />
<rect x="466.5" y="635.75" width="4" height="2.5" stroke="#00ff00" stroke-width="1" fill="none" />
<rect x="466.5" y="710.75" width="4" height="2.5" stroke="#00ff00" stroke-width="1" fill="none" />
<rect x="514" y="578" width="14" height="10" stroke="#00ffff" stroke-width="1" fill="none" />
<rect x="516" y="575.5" width="8" height="3" stroke="#00ff00" stroke-width="1" fill="none" />
<rect x="512.3" y="588" width="2.7" height="36" fill="#ffffff"/>
<rect x="525.8" y="588" width="2.7" height="36" fill="#ffffff"/>
<rect x="511.5" y="624" width="3" height="46" fill="#ffffff"/>
<rect x="527" y="624" width="3" height="46" fill="#ffffff"/>
<rect x="516" y="591" width="1.5" height="30" fill="#ffffff"/>
<rect x="523" y="591" width="1.5" height="30" fill="#ffffff"/>
<rect x="512" y="623" width="18" height="2" fill="#ffffff"/>
<rect x="512" y="645" width="18" height="1.5" fill="#00ffff"/>
<rect x="503" y="651.5" width="37" height="18" rx="4" fill="#ffffff"/>
<rect x="503" y="700.5" width="37" height="18" rx="4" fill="#ffffff"/>
<rect x="509" y="659" width="25" height="3.5" fill="#000"/>
<rect x="509" y="707.5" width="25" height="3.5" fill="#000"/>
<rect x="506" y="666" width="31" height="2" fill="#000"/>
<rect x="506" y="702" width="31" height="2" fill="#000"/>
<rect x="576" y="651.5" width="40" height="18" rx="4" fill="#ffffff"/>
<rect x="576" y="700.5" width="40" height="18" rx="4" fill="#ffffff"/>
<rect x="582" y="659" width="28" height="3.5" fill="#000"/>
<rect x="582" y="707.5" width="28" height="3.5" fill="#000"/>
<rect x="579" y="666" width="34" height="2" fill="#000"/>
<rect x="579" y="702" width="34" height="2" fill="#000"/>
<rect x="515" y="652" width="11" height="18" fill="#000"/>
<rect x="592" y="700" width="10" height="19" fill="#000"/>
<rect x="592" y="652" width="10" height="18" fill="#000"/>
<polygon points="486.6,657.5 663.7,657.5 677,664.3 677,705 663.7,712 486.6,712 474,705 474,663.4" stroke="#ffffff" stroke-width="3" fill="none" />
<polyline points="648,660 662,660 674,666 674,703 662,709 648,709" stroke="#ffffff" stroke-width="1.5" fill="none" />
<rect x="509" y="660" width="5" height="4" fill="#000"/>
<rect x="509" y="706" width="5" height="4" fill="#000"/>
<rect x="490.5" y="670.5" width="169.5" height="30.5" rx="2" fill="none" stroke="#ffffff" stroke-width="3"/>
<rect x="501" y="673.5" width="156.5" height="23" rx="2" fill="#ffffff"/>
<rect x="545" y="679.2" width="36" height="2.8" fill="#000"/>
<rect x="545" y="688.2" width="36" height="2.8" fill="#000"/>
<rect x="611" y="679.2" width="36" height="2.8" fill="#000"/>
<rect x="611" y="688.2" width="36" height="2.8" fill="#000"/>
<rect x="512.5" y="675.5" width="17" height="19.5" fill="#000"/>
<rect x="516.5" y="676" width="1.5" height="19" fill="#ffffff"/>
<rect x="523.5" y="676" width="1.5" height="19" fill="#ffffff"/>
<rect x="589" y="675.5" width="16" height="19.5" fill="#000"/>
<rect x="592" y="676" width="1.5" height="19" fill="#ffffff"/>
<rect x="600.5" y="676" width="1.5" height="19" fill="#ffffff"/>
<rect x="507.2" y="675" width="3" height="20" fill="#000"/>
<rect x="507.7" y="676" width="2" height="18" fill="#ffff00"/>
<line x1="507.2" y1="678.5" x2="510.2" y2="676" stroke="#000" stroke-width="0.8" />
<line x1="507.2" y1="681.5" x2="510.2" y2="679" stroke="#000" stroke-width="0.8" />
<line x1="507.2" y1="684.5" x2="510.2" y2="682" stroke="#000" stroke-width="0.8" />
<line x1="507.2" y1="687.5" x2="510.2" y2="685" stroke="#000" stroke-width="0.8" />
<line x1="507.2" y1="690.5" x2="510.2" y2="688" stroke="#000" stroke-width="0.8" />
<line x1="507.2" y1="693.5" x2="510.2" y2="691" stroke="#000" stroke-width="0.8" />
<rect x="531.1" y="675" width="3" height="20" fill="#000"/>
<rect x="531.6" y="676" width="2" height="18" fill="#ffff00"/>
<line x1="531.1" y1="678.5" x2="534.1" y2="676" stroke="#000" stroke-width="0.8" />
<line x1="531.1" y1="681.5" x2="534.1" y2="679" stroke="#000" stroke-width="0.8" />
<line x1="531.1" y1="684.5" x2="534.1" y2="682" stroke="#000" stroke-width="0.8" />
<line x1="531.1" y1="687.5" x2="534.1" y2="685" stroke="#000" stroke-width="0.8" />
<line x1="531.1" y1="690.5" x2="534.1" y2="688" stroke="#000" stroke-width="0.8" />
<line x1="531.1" y1="693.5" x2="534.1" y2="691" stroke="#000" stroke-width="0.8" />
<rect x="583.0" y="675" width="3" height="20" fill="#000"/>
<rect x="583.5" y="676" width="2" height="18" fill="#ffff00"/>
<line x1="583.0" y1="678.5" x2="586.0" y2="676" stroke="#000" stroke-width="0.8" />
<line x1="583.0" y1="681.5" x2="586.0" y2="679" stroke="#000" stroke-width="0.8" />
<line x1="583.0" y1="684.5" x2="586.0" y2="682" stroke="#000" stroke-width="0.8" />
<line x1="583.0" y1="687.5" x2="586.0" y2="685" stroke="#000" stroke-width="0.8" />
<line x1="583.0" y1="690.5" x2="586.0" y2="688" stroke="#000" stroke-width="0.8" />
<line x1="583.0" y1="693.5" x2="586.0" y2="691" stroke="#000" stroke-width="0.8" />
<rect x="606.0" y="675" width="3" height="20" fill="#000"/>
<rect x="606.5" y="676" width="2" height="18" fill="#ffff00"/>
<line x1="606.0" y1="678.5" x2="609.0" y2="676" stroke="#000" stroke-width="0.8" />
<line x1="606.0" y1="681.5" x2="609.0" y2="679" stroke="#000" stroke-width="0.8" />
<line x1="606.0" y1="684.5" x2="609.0" y2="682" stroke="#000" stroke-width="0.8" />
<line x1="606.0" y1="687.5" x2="609.0" y2="685" stroke="#000" stroke-width="0.8" />
<line x1="606.0" y1="690.5" x2="609.0" y2="688" stroke="#000" stroke-width="0.8" />
<line x1="606.0" y1="693.5" x2="609.0" y2="691" stroke="#000" stroke-width="0.8" />
<rect x="649.0" y="675" width="3" height="20" fill="#000"/>
<rect x="649.5" y="676" width="2" height="18" fill="#ffff00"/>
<line x1="649.0" y1="678.5" x2="652.0" y2="676" stroke="#000" stroke-width="0.8" />
<line x1="649.0" y1="681.5" x2="652.0" y2="679" stroke="#000" stroke-width="0.8" />
<line x1="649.0" y1="684.5" x2="652.0" y2="682" stroke="#000" stroke-width="0.8" />
<line x1="649.0" y1="687.5" x2="652.0" y2="685" stroke="#000" stroke-width="0.8" />
<line x1="649.0" y1="690.5" x2="652.0" y2="688" stroke="#000" stroke-width="0.8" />
<line x1="649.0" y1="693.5" x2="652.0" y2="691" stroke="#000" stroke-width="0.8" />
<rect x="541" y="675" width="2" height="20" fill="#ffff00"/>
<rect x="589" y="696" width="3" height="46" fill="#ffffff"/>
<rect x="602" y="696" width="3" height="46" fill="#ffffff"/>
<rect x="592" y="696" width="10" height="2" fill="#ffffff"/>
<rect x="589" y="710" width="16" height="1.5" fill="#ffff00"/>
<rect x="590" y="741" width="12" height="7" stroke="#00ffff" stroke-width="1" fill="none" />
<rect x="594.0" y="743.25" width="4" height="2.5" stroke="#00ff00" stroke-width="1" fill="none" />
<line x1="520" y1="578" x2="520" y2="700" stroke="#ff0000" stroke-width="1" stroke-dasharray="8 2 2 2"/>
<line x1="596" y1="650" x2="596" y2="745" stroke="#ff0000" stroke-width="1" stroke-dasharray="8 2 2 2"/>
<line x1="468" y1="685.5" x2="684" y2="685.5" stroke="#ff0000" stroke-width="1" stroke-dasharray="8 2 2 2"/>
<circle cx="501" cy="661.6" r="2.2" stroke="#ffffff" stroke-width="1" fill="#ffffff" />
<line x1="496" y1="661.6" x2="506" y2="661.6" stroke="#ff0000" stroke-width="1" />
<line x1="501" y1="656.6" x2="501" y2="666.6" stroke="#ff0000" stroke-width="1" />
<circle cx="545.2" cy="661.6" r="2.2" stroke="#ffffff" stroke-width="1" fill="#ffffff" />
<line x1="540.2" y1="661.6" x2="550.2" y2="661.6" stroke="#ff0000" stroke-width="1" />
<line x1="545.2" y1="656.6" x2="545.2" y2="666.6" stroke="#ff0000" stroke-width="1" />
<circle cx="575.8" cy="661.6" r="2.2" stroke="#ffffff" stroke-width="1" fill="#ffffff" />
<line x1="570.8" y1="661.6" x2="580.8" y2="661.6" stroke="#ff0000" stroke-width="1" />
<line x1="575.8" y1="656.6" x2="575.8" y2="666.6" stroke="#ff0000" stroke-width="1" />
<circle cx="614.5" cy="661.6" r="2.2" stroke="#ffffff" stroke-width="1" fill="#ffffff" />
<line x1="609.5" y1="661.6" x2="619.5" y2="661.6" stroke="#ff0000" stroke-width="1" />
<line x1="614.5" y1="656.6" x2="614.5" y2="666.6" stroke="#ff0000" stroke-width="1" />
<circle cx="501" cy="708.5" r="2.2" stroke="#ffffff" stroke-width="1" fill="#ffffff" />
<line x1="496" y1="708.5" x2="506" y2="708.5" stroke="#ff0000" stroke-width="1" />
<line x1="501" y1="703.5" x2="501" y2="713.5" stroke="#ff0000" stroke-width="1" />
<circle cx="545.2" cy="708.5" r="2.2" stroke="#ffffff" stroke-width="1" fill="#ffffff" />
<line x1="540.2" y1="708.5" x2="550.2" y2="708.5" stroke="#ff0000" stroke-width="1" />
<line x1="545.2" y1="703.5" x2="545.2" y2="713.5" stroke="#ff0000" stroke-width="1" />
<circle cx="575.8" cy="708.5" r="2.2" stroke="#ffffff" stroke-width="1" fill="#ffffff" />
<line x1="570.8" y1="708.5" x2="580.8" y2="708.5" stroke="#ff0000" stroke-width="1" />
<line x1="575.8" y1="703.5" x2="575.8" y2="713.5" stroke="#ff0000" stroke-width="1" />
<circle cx="615" cy="708.5" r="2.2" stroke="#ffffff" stroke-width="1" fill="#ffffff" />
<line x1="610" y1="708.5" x2="620" y2="708.5" stroke="#ff0000" stroke-width="1" />
<line x1="615" y1="703.5" x2="615" y2="713.5" stroke="#ff0000" stroke-width="1" />
<line x1="666" y1="678.5" x2="674" y2="678.5" stroke="#ff0000" stroke-width="1" />
<line x1="670" y1="674.5" x2="670" y2="682.5" stroke="#ff0000" stroke-width="1" />
<line x1="666" y1="692" x2="674" y2="692" stroke="#ff0000" stroke-width="1" />
<line x1="670" y1="688" x2="670" y2="696" stroke="#ff0000" stroke-width="1" />
<line x1="639.5" y1="703.5" x2="647.5" y2="703.5" stroke="#ff0000" stroke-width="1" />
<line x1="643.5" y1="699.5" x2="643.5" y2="707.5" stroke="#ff0000" stroke-width="1" />
<line x1="476" y1="673" x2="484" y2="673" stroke="#ff0000" stroke-width="1" />
<line x1="480" y1="669" x2="480" y2="677" stroke="#ff0000" stroke-width="1" />
<line x1="479" y1="678" x2="487" y2="678" stroke="#ff0000" stroke-width="1" />
<line x1="483" y1="674" x2="483" y2="682" stroke="#ff0000" stroke-width="1" />
<line x1="479" y1="692" x2="487" y2="692" stroke="#ff0000" stroke-width="1" />
<line x1="483" y1="688" x2="483" y2="696" stroke="#ff0000" stroke-width="1" />
<circle cx="483" cy="678" r="1.8" stroke="#ffffff" stroke-width="1" fill="none" />
<path d="M478,690 C476,694 478,698 483,698" stroke="#ffffff" stroke-width="3" fill="none" />
<circle cx="501" cy="708.5" r="3.5" stroke="#ffffff" stroke-width="2.5" fill="none" />
<rect x="516" y="640" width="8" height="3" stroke="#00ff00" stroke-width="1" fill="none" />
<rect x="516" y="665.5" width="8" height="3" stroke="#00ff00" stroke-width="1" fill="none" />
<rect x="514" y="679.5" width="12" height="3" stroke="#00ff00" stroke-width="1.5" fill="none" />
<rect x="592" y="666" width="8" height="3" stroke="#00ff00" stroke-width="1" fill="none" />
<rect x="590" y="681.5" width="12" height="2.5" stroke="#00ff00" stroke-width="1.5" fill="none" />
<rect x="592" y="700" width="8" height="3" stroke="#00ff00" stroke-width="1" fill="none" />
<line x1="505" y1="667.5" x2="530" y2="667.5" stroke="#00ffff" stroke-width="1" />
<line x1="582" y1="668" x2="609" y2="668" stroke="#00ffff" stroke-width="1" />
<line x1="584" y1="703" x2="606" y2="703" stroke="#00ffff" stroke-width="1" />
<line x1="513" y1="685.5" x2="530" y2="685.5" stroke="#00ffff" stroke-width="1" />
<line x1="580" y1="685.5" x2="606" y2="685.5" stroke="#00ffff" stroke-width="1" />
<rect x="487.7" y="638.25" width="4" height="2.5" stroke="#00ff00" stroke-width="1" fill="none" />
<rect x="495.8" y="638.25" width="4" height="2.5" stroke="#00ff00" stroke-width="1" fill="none" />
<rect x="501.8" y="638.25" width="4" height="2.5" stroke="#00ff00" stroke-width="1" fill="none" />
<rect x="534.5" y="638.25" width="4" height="2.5" stroke="#00ff00" stroke-width="1" fill="none" />
<rect x="550.0" y="638.25" width="4" height="2.5" stroke="#00ff00" stroke-width="1" fill="none" />
<rect x="580.5" y="638.25" width="4" height="2.5" stroke="#00ff00" stroke-width="1" fill="none" />
<rect x="588.5" y="638.25" width="4" height="2.5" stroke="#00ff00" stroke-width="1" fill="none" />
<rect x="596.0" y="638.25" width="4" height="2.5" stroke="#00ff00" stroke-width="1" fill="none" />
<rect x="602.3" y="638.25" width="4" height="2.5" stroke="#00ff00" stroke-width="1" fill="none" />
<rect x="610.7" y="638.25" width="4" height="2.5" stroke="#00ff00" stroke-width="1" fill="none" />
<rect x="619.4" y="638.25" width="4" height="2.5" stroke="#00ff00" stroke-width="1" fill="none" />
<line x1="487.7" y1="642" x2="503" y2="659" stroke="#00ffff" stroke-width="1" />
<line x1="486.7" y1="642" x2="492.7" y2="642" stroke="#00ffff" stroke-width="1" />
<line x1="495.8" y1="642" x2="505" y2="660" stroke="#00ffff" stroke-width="1" />
<line x1="494.8" y1="642" x2="500.8" y2="642" stroke="#00ffff" stroke-width="1" />
<line x1="501.8" y1="642" x2="513" y2="620" stroke="#00ffff" stroke-width="1" />
<line x1="500.8" y1="642" x2="506.8" y2="642" stroke="#00ffff" stroke-width="1" />
<line x1="534.5" y1="642" x2="524" y2="650" stroke="#00ffff" stroke-width="1" />
<line x1="533.5" y1="642" x2="539.5" y2="642" stroke="#00ffff" stroke-width="1" />
<line x1="550" y1="642" x2="530" y2="657" stroke="#00ffff" stroke-width="1" />
<line x1="549" y1="642" x2="555" y2="642" stroke="#00ffff" stroke-width="1" />
<line x1="580.5" y1="642" x2="577" y2="662" stroke="#00ffff" stroke-width="1" />
<line x1="579.5" y1="642" x2="585.5" y2="642" stroke="#00ffff" stroke-width="1" />
<line x1="588.5" y1="642" x2="586" y2="670" stroke="#00ffff" stroke-width="1" />
<line x1="587.5" y1="642" x2="593.5" y2="642" stroke="#00ffff" stroke-width="1" />
<line x1="596" y1="642" x2="592" y2="672" stroke="#00ffff" stroke-width="1" />
<line x1="595" y1="642" x2="601" y2="642" stroke="#00ffff" stroke-width="1" />
<line x1="602.3" y1="642" x2="600" y2="672" stroke="#00ffff" stroke-width="1" />
<line x1="601.3" y1="642" x2="607.3" y2="642" stroke="#00ffff" stroke-width="1" />
<line x1="610.7" y1="642" x2="605" y2="676" stroke="#00ffff" stroke-width="1" />
<line x1="609.7" y1="642" x2="615.7" y2="642" stroke="#00ffff" stroke-width="1" />
<line x1="619.4" y1="642" x2="612" y2="682" stroke="#00ffff" stroke-width="1" />
<line x1="618.4" y1="642" x2="624.4" y2="642" stroke="#00ffff" stroke-width="1" />
<rect x="515.7" y="724.25" width="4" height="2.5" stroke="#00ff00" stroke-width="1" fill="none" />
<rect x="529.9" y="724.25" width="4" height="2.5" stroke="#00ff00" stroke-width="1" fill="none" />
<rect x="541.8" y="724.25" width="4" height="2.5" stroke="#00ff00" stroke-width="1" fill="none" />
<rect x="564.5" y="724.25" width="4" height="2.5" stroke="#00ff00" stroke-width="1" fill="none" />
<rect x="578.0" y="724.25" width="4" height="2.5" stroke="#00ff00" stroke-width="1" fill="none" />
<rect x="623.5" y="724.25" width="4" height="2.5" stroke="#00ff00" stroke-width="1" fill="none" />
<rect x="635.0" y="724.25" width="4" height="2.5" stroke="#00ff00" stroke-width="1" fill="none" />
<rect x="648.4" y="724.25" width="4" height="2.5" stroke="#00ff00" stroke-width="1" fill="none" />
<line x1="515.7" y1="727.5" x2="505" y2="708" stroke="#00ffff" stroke-width="1" />
<line x1="514.7" y1="727.5" x2="520.7" y2="727.5" stroke="#00ffff" stroke-width="1" />
<line x1="529.9" y1="727.5" x2="521" y2="690" stroke="#00ffff" stroke-width="1" />
<line x1="528.9" y1="727.5" x2="534.9" y2="727.5" stroke="#00ffff" stroke-width="1" />
<line x1="541.8" y1="727.5" x2="535" y2="705" stroke="#00ffff" stroke-width="1" />
<line x1="540.8" y1="727.5" x2="546.8" y2="727.5" stroke="#00ffff" stroke-width="1" />
<line x1="564.5" y1="727.5" x2="587" y2="700" stroke="#00ffff" stroke-width="1" />
<line x1="563.5" y1="727.5" x2="569.5" y2="727.5" stroke="#00ffff" stroke-width="1" />
<line x1="578" y1="727.5" x2="588" y2="716" stroke="#00ffff" stroke-width="1" />
<line x1="577" y1="727.5" x2="583" y2="727.5" stroke="#00ffff" stroke-width="1" />
<line x1="623.5" y1="727.5" x2="614" y2="710" stroke="#00ffff" stroke-width="1" />
<line x1="622.5" y1="727.5" x2="628.5" y2="727.5" stroke="#00ffff" stroke-width="1" />
<line x1="635" y1="727.5" x2="614" y2="712" stroke="#00ffff" stroke-width="1" />
<line x1="634" y1="727.5" x2="640" y2="727.5" stroke="#00ffff" stroke-width="1" />
<line x1="648.4" y1="727.5" x2="616" y2="714" stroke="#00ffff" stroke-width="1" />
<line x1="647.4" y1="727.5" x2="653.4" y2="727.5" stroke="#00ffff" stroke-width="1" />
<line x1="600" y1="731" x2="628" y2="727" stroke="#00ffff" stroke-width="1" />
<line x1="478" y1="685" x2="505" y2="685" stroke="#00ffff" stroke-width="1" />
<rect x="787.5" y="595.5" width="13" height="5" stroke="#00ff00" stroke-width="1" fill="none" />
<rect x="741.5" y="606.5" width="107" height="27" stroke="#ffffff" stroke-width="2.5" fill="none" />
<line x1="760.5" y1="607" x2="760.5" y2="634" stroke="#00ffff" stroke-width="1" />
<line x1="777.5" y1="607" x2="777.5" y2="634" stroke="#00ffff" stroke-width="1" />
<line x1="795.5" y1="607" x2="795.5" y2="634" stroke="#00ffff" stroke-width="1" />
<line x1="812.5" y1="607" x2="812.5" y2="634" stroke="#00ffff" stroke-width="1" />
<line x1="742" y1="616.5" x2="848" y2="616.5" stroke="#00ffff" stroke-width="1" />
<rect x="745.5" y="609.5" width="11" height="4.5" stroke="#00ff00" stroke-width="1" fill="none" />
<rect x="762.5" y="609.5" width="11" height="4.5" stroke="#00ff00" stroke-width="1" fill="none" />
<rect x="783" y="609.5" width="5" height="4.5" stroke="#00ff00" stroke-width="1" fill="none" />
<rect x="797.5" y="609.5" width="11" height="4.5" stroke="#00ff00" stroke-width="1" fill="none" />
<rect x="823" y="609.5" width="11" height="4.5" stroke="#00ff00" stroke-width="1" fill="none" />
<rect x="744.5" y="622" width="12" height="4" stroke="#00ff00" stroke-width="1" fill="none" />
<rect x="761.5" y="622" width="14" height="4" stroke="#00ff00" stroke-width="1" fill="none" />
<rect x="781" y="622" width="7" height="4" stroke="#00ff00" stroke-width="1" fill="none" />
<rect x="801" y="622" width="3" height="4" stroke="#00ff00" stroke-width="1" fill="none" />
<rect x="814" y="619" width="3" height="4" stroke="#00ff00" stroke-width="1" fill="none" />
<rect x="822" y="618" width="6" height="4" stroke="#00ff00" stroke-width="1" fill="none" />
<rect x="832" y="618" width="12" height="5" stroke="#00ff00" stroke-width="1" fill="none" />
<rect x="831" y="627" width="16" height="3" stroke="#00ff00" stroke-width="1" fill="none" />
<line x1="819.5" y1="617" x2="819.5" y2="634" stroke="#00ffff" stroke-width="1" />
<line x1="824.5" y1="617" x2="824.5" y2="634" stroke="#00ffff" stroke-width="1" />
<line x1="830.5" y1="617" x2="830.5" y2="634" stroke="#00ffff" stroke-width="1" />
<line x1="812" y1="625.5" x2="848" y2="625.5" stroke="#00ffff" stroke-width="1" />
<rect x="815" y="626" width="2" height="4" stroke="#00ff00" stroke-width="1" fill="none" />
<rect x="820.5" y="626" width="2" height="4" stroke="#00ff00" stroke-width="1" fill="none" />
<rect x="826" y="626" width="2" height="4" stroke="#00ff00" stroke-width="1" fill="none" />
<rect x="787.5" y="641.5" width="14" height="6" stroke="#00ff00" stroke-width="1" fill="none" />
<rect x="733.5" y="656" width="116.0" height="5.5" stroke="#00ff00" stroke-width="1" fill="none" />
<rect x="733.5" y="662.5" width="27.0" height="5.0" stroke="#00ff00" stroke-width="1" fill="none" />
<rect x="733.5" y="668.5" width="97.0" height="4.0" stroke="#00ff00" stroke-width="1" fill="none" />
<rect x="733.5" y="674.5" width="113.0" height="4.0" stroke="#00ff00" stroke-width="1" fill="none" />
<rect x="736.5" y="681.5" width="41.5" height="4.0" stroke="#00ff00" stroke-width="1" fill="none" />
<rect x="733.5" y="687.5" width="76.0" height="4.0" stroke="#00ff00" stroke-width="1" fill="none" />
<rect x="733.5" y="694.5" width="23.0" height="4.0" stroke="#00ff00" stroke-width="1" fill="none" />
<rect x="733.5" y="706.5" width="105.0" height="4.0" stroke="#00ff00" stroke-width="1" fill="none" />
<rect x="734.5" y="713.5" width="72.0" height="5.0" stroke="#00ff00" stroke-width="1" fill="none" />
<rect x="919" y="593" width="3" height="183" fill="#ffffff"/>
<rect x="1014" y="593" width="3" height="183" fill="#ffffff"/>
<rect x="922" y="594" width="92" height="1" fill="#00ffff"/>
<rect x="922" y="598" width="92" height="1" fill="#00ffff"/>
<rect x="922" y="602" width="92" height="1" fill="#00ffff"/>
<rect x="922" y="606" width="92" height="1" fill="#00ffff"/>
<rect x="922" y="610" width="92" height="1" fill="#00ffff"/>
<rect x="922" y="614" width="92" height="1" fill="#00ffff"/>
<rect x="922" y="618" width="92" height="1" fill="#00ffff"/>
<rect x="922" y="622" width="92" height="1" fill="#00ffff"/>
<rect x="922" y="626" width="92" height="1" fill="#00ffff"/>
<rect x="922" y="630" width="92" height="1" fill="#00ffff"/>
<rect x="922" y="634" width="92" height="1" fill="#00ffff"/>
<rect x="922" y="638" width="92" height="1" fill="#00ffff"/>
<rect x="922" y="642" width="92" height="1" fill="#00ffff"/>
<rect x="922" y="646" width="92" height="1" fill="#00ffff"/>
<rect x="922" y="650" width="92" height="1" fill="#00ffff"/>
<rect x="922" y="654" width="92" height="1" fill="#00ffff"/>
<rect x="922" y="658" width="92" height="1" fill="#00ffff"/>
<rect x="922" y="662" width="92" height="1" fill="#00ffff"/>
<rect x="922" y="666" width="92" height="1" fill="#00ffff"/>
<rect x="922" y="670" width="92" height="1" fill="#00ffff"/>
<rect x="922" y="674" width="92" height="1" fill="#00ffff"/>
<rect x="922" y="678" width="92" height="1" fill="#00ffff"/>
<rect x="922" y="682" width="92" height="1" fill="#00ffff"/>
<rect x="922" y="686" width="92" height="1" fill="#00ffff"/>
<rect x="922" y="690" width="92" height="1" fill="#00ffff"/>
<rect x="922" y="694" width="92" height="1" fill="#00ffff"/>
<rect x="922" y="698" width="92" height="1" fill="#00ffff"/>
<rect x="922" y="702" width="92" height="1" fill="#00ffff"/>
<rect x="922" y="706" width="92" height="1" fill="#00ffff"/>
<rect x="922" y="710" width="92" height="1" fill="#00ffff"/>
<rect x="922" y="714" width="92" height="1" fill="#00ffff"/>
<rect x="922" y="718" width="92" height="1" fill="#00ffff"/>
<rect x="922" y="722" width="92" height="1" fill="#00ffff"/>
<rect x="922" y="726" width="92" height="1" fill="#00ffff"/>
<rect x="922" y="730" width="92" height="1" fill="#00ffff"/>
<rect x="922" y="734" width="92" height="1" fill="#00ffff"/>
<rect x="922" y="738" width="92" height="1" fill="#00ffff"/>
<rect x="922" y="742" width="92" height="1" fill="#00ffff"/>
<rect x="922" y="746" width="92" height="1" fill="#00ffff"/>
<rect x="926" y="594" width="1" height="155" fill="#00ffff"/>
<rect x="945" y="594" width="1" height="155" fill="#00ffff"/>
<rect x="963" y="594" width="1" height="155" fill="#00ffff"/>
<rect x="969" y="594" width="1" height="155" fill="#00ffff"/>
<rect x="987" y="594" width="1" height="155" fill="#00ffff"/>
<rect x="993" y="594" width="1" height="155" fill="#00ffff"/>
<rect x="999" y="594" width="1" height="155" fill="#00ffff"/>
<rect x="923" y="595" width="3" height="1" fill="#00ff00"/>
<rect x="923" y="597" width="3" height="1" fill="#00ff00"/>
<rect x="923" y="595" width="1" height="3" fill="#00ff00"/>
<rect x="925" y="595" width="1" height="3" fill="#00ff00"/>
<rect x="928" y="595" width="15" height="1" fill="#00ff00"/>
<rect x="928" y="597" width="15" height="1" fill="#00ff00"/>
<rect x="928" y="595" width="1" height="3" fill="#00ff00"/>
<rect x="942" y="595" width="1" height="3" fill="#00ff00"/>
<rect x="947" y="595" width="5" height="1" fill="#00ff00"/>
<rect x="947" y="597" width="5" height="1" fill="#00ff00"/>
<rect x="947" y="595" width="1" height="3" fill="#00ff00"/>
<rect x="951" y="595" width="1" height="3" fill="#00ff00"/>
<rect x="966" y="595" width="1" height="3" fill="#00ff00"/>
<rect x="967" y="595" width="1" height="3" fill="#00ff00"/>
<rect x="923" y="599" width="3" height="1" fill="#00ff00"/>
<rect x="923" y="601" width="3" height="1" fill="#00ff00"/>
<rect x="923" y="599" width="1" height="3" fill="#00ff00"/>
<rect x="925" y="599" width="1" height="3" fill="#00ff00"/>
<rect x="928" y="599" width="11" height="1" fill="#00ff00"/>
<rect x="928" y="601" width="11" height="1" fill="#00ff00"/>
<rect x="928" y="599" width="1" height="3" fill="#00ff00"/>
<rect x="938" y="599" width="1" height="3" fill="#00ff00"/>
<rect x="947" y="599" width="12" height="1" fill="#00ff00"/>
<rect x="947" y="601" width="12" height="1" fill="#00ff00"/>
<rect x="947" y="599" width="1" height="3" fill="#00ff00"/>
<rect x="958" y="599" width="1" height="3" fill="#00ff00"/>
<rect x="977" y="599" width="5" height="1" fill="#00ff00"/>
<rect x="977" y="601" width="5" height="1" fill="#00ff00"/>
<rect x="977" y="599" width="1" height="3" fill="#00ff00"/>
<rect x="981" y="599" width="1" height="3" fill="#00ff00"/>
<rect x="923" y="603" width="3" height="1" fill="#00ff00"/>
<rect x="923" y="605" width="3" height="1" fill="#00ff00"/>
<rect x="923" y="603" width="1" height="3" fill="#00ff00"/>
<rect x="925" y="603" width="1" height="3" fill="#00ff00"/>
<rect x="928" y="603" width="9" height="1" fill="#00ff00"/>
<rect x="928" y="605" width="9" height="1" fill="#00ff00"/>
<rect x="928" y="603" width="1" height="3" fill="#00ff00"/>
<rect x="936" y="603" width="1" height="3" fill="#00ff00"/>
<rect x="947" y="603" width="9" height="1" fill="#00ff00"/>
<rect x="947" y="605" width="9" height="1" fill="#00ff00"/>
<rect x="947" y="603" width="1" height="3" fill="#00ff00"/>
<rect x="955" y="603" width="1" height="3" fill="#00ff00"/>
<rect x="966" y="603" width="1" height="3" fill="#00ff00"/>
<rect x="967" y="603" width="1" height="3" fill="#00ff00"/>
<rect x="923" y="607" width="3" height="1" fill="#00ff00"/>
<rect x="923" y="609" width="3" height="1" fill="#00ff00"/>
<rect x="923" y="607" width="1" height="3" fill="#00ff00"/>
<rect x="925" y="607" width="1" height="3" fill="#00ff00"/>
<rect x="928" y="607" width="16" height="1" fill="#00ff00"/>
<rect x="928" y="609" width="16" height="1" fill="#00ff00"/>
<rect x="928" y="607" width="1" height="3" fill="#00ff00"/>
<rect x="943" y="607" width="1" height="3" fill="#00ff00"/>
<rect x="947" y="607" width="8" height="1" fill="#00ff00"/>
<rect x="947" y="609" width="8" height="1" fill="#00ff00"/>
<rect x="947" y="607" width="1" height="3" fill="#00ff00"/>
<rect x="954" y="607" width="1" height="3" fill="#00ff00"/>
<rect x="966" y="607" width="1" height="3" fill="#00ff00"/>
<rect x="967" y="607" width="1" height="3" fill="#00ff00"/>
<rect x="923" y="611" width="3" height="1" fill="#00ff00"/>
<rect x="923" y="613" width="3" height="1" fill="#00ff00"/>
<rect x="923" y="611" width="1" height="3" fill="#00ff00"/>
<rect x="925" y="611" width="1" height="3" fill="#00ff00"/>
<rect x="928" y="611" width="16" height="1" fill="#00ff00"/>
<rect x="928" y="613" width="16" height="1" fill="#00ff00"/>
<rect x="928" y="611" width="1" height="3" fill="#00ff00"/>
<rect x="943" y="611" width="1" height="3" fill="#00ff00"/>
<rect x="947" y="611" width="4" height="1" fill="#00ff00"/>
<rect x="947" y="613" width="4" height="1" fill="#00ff00"/>
<rect x="947" y="611" width="1" height="3" fill="#00ff00"/>
<rect x="950" y="611" width="1" height="3" fill="#00ff00"/>
<rect x="923" y="615" width="3" height="1" fill="#00ff00"/>
<rect x="923" y="617" width="3" height="1" fill="#00ff00"/>
<rect x="923" y="615" width="1" height="3" fill="#00ff00"/>
<rect x="925" y="615" width="1" height="3" fill="#00ff00"/>
<rect x="928" y="615" width="13" height="1" fill="#00ff00"/>
<rect x="928" y="617" width="13" height="1" fill="#00ff00"/>
<rect x="928" y="615" width="1" height="3" fill="#00ff00"/>
<rect x="940" y="615" width="1" height="3" fill="#00ff00"/>
<rect x="947" y="615" width="10" height="1" fill="#00ff00"/>
<rect x="947" y="617" width="10" height="1" fill="#00ff00"/>
<rect x="947" y="615" width="1" height="3" fill="#00ff00"/>
<rect x="956" y="615" width="1" height="3" fill="#00ff00"/>
<rect x="923" y="619" width="3" height="1" fill="#00ff00"/>
<rect x="923" y="621" width="3" height="1" fill="#00ff00"/>
<rect x="923" y="619" width="1" height="3" fill="#00ff00"/>
<rect x="925" y="619" width="1" height="3" fill="#00ff00"/>
<rect x="928" y="619" width="16" height="1" fill="#00ff00"/>
<rect x="928" y="621" width="16" height="1" fill="#00ff00"/>
<rect x="928" y="619" width="1" height="3" fill="#00ff00"/>
<rect x="943" y="619" width="1" height="3" fill="#00ff00"/>
<rect x="947" y="619" width="4" height="1" fill="#00ff00"/>
<rect x="947" y="621" width="4" height="1" fill="#00ff00"/>
<rect x="947" y="619" width="1" height="3" fill="#00ff00"/>
<rect x="950" y="619" width="1" height="3" fill="#00ff00"/>
<rect x="923" y="623" width="3" height="1" fill="#00ff00"/>
<rect x="923" y="625" width="3" height="1" fill="#00ff00"/>
<rect x="923" y="623" width="1" height="3" fill="#00ff00"/>
<rect x="925" y="623" width="1" height="3" fill="#00ff00"/>
<rect x="928" y="623" width="12" height="1" fill="#00ff00"/>
<rect x="928" y="625" width="12" height="1" fill="#00ff00"/>
<rect x="928" y="623" width="1" height="3" fill="#00ff00"/>
<rect x="939" y="623" width="1" height="3" fill="#00ff00"/>
<rect x="947" y="623" width="7" height="1" fill="#00ff00"/>
<rect x="947" y="625" width="7" height="1" fill="#00ff00"/>
<rect x="947" y="623" width="1" height="3" fill="#00ff00"/>
<rect x="953" y="623" width="1" height="3" fill="#00ff00"/>
<rect x="966" y="623" width="1" height="3" fill="#00ff00"/>
<rect x="967" y="623" width="1" height="3" fill="#00ff00"/>
<rect x="976" y="623" width="6" height="1" fill="#00ff00"/>
<rect x="976" y="625" width="6" height="1" fill="#00ff00"/>
<rect x="976" y="623" width="1" height="3" fill="#00ff00"/>
<rect x="981" y="623" width="1" height="3" fill="#00ff00"/>
<rect x="923" y="627" width="3" height="1" fill="#00ff00"/>
<rect x="923" y="629" width="3" height="1" fill="#00ff00"/>
<rect x="923" y="627" width="1" height="3" fill="#00ff00"/>
<rect x="925" y="627" width="1" height="3" fill="#00ff00"/>
<rect x="928" y="627" width="11" height="1" fill="#00ff00"/>
<rect x="928" y="629" width="11" height="1" fill="#00ff00"/>
<rect x="928" y="627" width="1" height="3" fill="#00ff00"/>
<rect x="938" y="627" width="1" height="3" fill="#00ff00"/>
<rect x="947" y="627" width="9" height="1" fill="#00ff00"/>
<rect x="947" y="629" width="9" height="1" fill="#00ff00"/>
<rect x="947" y="627" width="1" height="3" fill="#00ff00"/>
<rect x="955" y="627" width="1" height="3" fill="#00ff00"/>
<rect x="966" y="627" width="1" height="3" fill="#00ff00"/>
<rect x="967" y="627" width="1" height="3" fill="#00ff00"/>
<rect x="975" y="627" width="8" height="1" fill="#00ff00"/>
<rect x="975" y="629" width="8" height="1" fill="#00ff00"/>
<rect x="975" y="627" width="1" height="3" fill="#00ff00"/>
<rect x="982" y="627" width="1" height="3" fill="#00ff00"/>
<rect x="923" y="631" width="3" height="1" fill="#00ff00"/>
<rect x="923" y="633" width="3" height="1" fill="#00ff00"/>
<rect x="923" y="631" width="1" height="3" fill="#00ff00"/>
<rect x="925" y="631" width="1" height="3" fill="#00ff00"/>
<rect x="928" y="631" width="12" height="1" fill="#00ff00"/>
<rect x="928" y="633" width="12" height="1" fill="#00ff00"/>
<rect x="928" y="631" width="1" height="3" fill="#00ff00"/>
<rect x="939" y="631" width="1" height="3" fill="#00ff00"/>
<rect x="947" y="631" width="4" height="1" fill="#00ff00"/>
<rect x="947" y="633" width="4" height="1" fill="#00ff00"/>
<rect x="947" y="631" width="1" height="3" fill="#00ff00"/>
<rect x="950" y="631" width="1" height="3" fill="#00ff00"/>
<rect x="976" y="631" width="7" height="1" fill="#00ff00"/>
<rect x="976" y="633" width="7" height="1" fill="#00ff00"/>
<rect x="976" y="631" width="1" height="3" fill="#00ff00"/>
<rect x="982" y="631" width="1" height="3" fill="#00ff00"/>
<rect x="923" y="635" width="3" height="1" fill="#00ff00"/>
<rect x="923" y="637" width="3" height="1" fill="#00ff00"/>
<rect x="923" y="635" width="1" height="3" fill="#00ff00"/>
<rect x="925" y="635" width="1" height="3" fill="#00ff00"/>
<rect x="928" y="635" width="13" height="1" fill="#00ff00"/>
<rect x="928" y="637" width="13" height="1" fill="#00ff00"/>
<rect x="928" y="635" width="1" height="3" fill="#00ff00"/>
<rect x="940" y="635" width="1" height="3" fill="#00ff00"/>
<rect x="947" y="635" width="7" height="1" fill="#00ff00"/>
<rect x="947" y="637" width="7" height="1" fill="#00ff00"/>
<rect x="947" y="635" width="1" height="3" fill="#00ff00"/>
<rect x="953" y="635" width="1" height="3" fill="#00ff00"/>
<rect x="966" y="635" width="1" height="3" fill="#00ff00"/>
<rect x="967" y="635" width="1" height="3" fill="#00ff00"/>
<rect x="976" y="635" width="7" height="1" fill="#00ff00"/>
<rect x="976" y="637" width="7" height="1" fill="#00ff00"/>
<rect x="976" y="635" width="1" height="3" fill="#00ff00"/>
<rect x="982" y="635" width="1" height="3" fill="#00ff00"/>
<rect x="923" y="639" width="3" height="1" fill="#00ff00"/>
<rect x="923" y="641" width="3" height="1" fill="#00ff00"/>
<rect x="923" y="639" width="1" height="3" fill="#00ff00"/>
<rect x="925" y="639" width="1" height="3" fill="#00ff00"/>
<rect x="928" y="639" width="11" height="1" fill="#00ff00"/>
<rect x="928" y="641" width="11" height="1" fill="#00ff00"/>
<rect x="928" y="639" width="1" height="3" fill="#00ff00"/>
<rect x="938" y="639" width="1" height="3" fill="#00ff00"/>
<rect x="947" y="639" width="9" height="1" fill="#00ff00"/>
<rect x="947" y="641" width="9" height="1" fill="#00ff00"/>
<rect x="947" y="639" width="1" height="3" fill="#00ff00"/>
<rect x="955" y="639" width="1" height="3" fill="#00ff00"/>
<rect x="966" y="639" width="1" height="3" fill="#00ff00"/>
<rect x="967" y="639" width="1" height="3" fill="#00ff00"/>
<rect x="978" y="639" width="3" height="1" fill="#00ff00"/>
<rect x="978" y="641" width="3" height="1" fill="#00ff00"/>
<rect x="978" y="639" width="1" height="3" fill="#00ff00"/>
<rect x="980" y="639" width="1" height="3" fill="#00ff00"/>
<rect x="923" y="643" width="3" height="1" fill="#00ff00"/>
<rect x="923" y="645" width="3" height="1" fill="#00ff00"/>
<rect x="923" y="643" width="1" height="3" fill="#00ff00"/>
<rect x="925" y="643" width="1" height="3" fill="#00ff00"/>
<rect x="928" y="643" width="17" height="1" fill="#00ff00"/>
<rect x="928" y="645" width="17" height="1" fill="#00ff00"/>
<rect x="928" y="643" width="1" height="3" fill="#00ff00"/>
<rect x="944" y="643" width="1" height="3" fill="#00ff00"/>
<rect x="947" y="643" width="10" height="1" fill="#00ff00"/>
<rect x="947" y="645" width="10" height="1" fill="#00ff00"/>
<rect x="947" y="643" width="1" height="3" fill="#00ff00"/>
<rect x="956" y="643" width="1" height="3" fill="#00ff00"/>
<rect x="975" y="643" width="8" height="1" fill="#00ff00"/>
<rect x="975" y="645" width="8" height="1" fill="#00ff00"/>
<rect x="975" y="643" width="1" height="3" fill="#00ff00"/>
<rect x="982" y="643" width="1" height="3" fill="#00ff00"/>
<rect x="923" y="647" width="3" height="1" fill="#00ff00"/>
<rect x="923" y="649" width="3" height="1" fill="#00ff00"/>
<rect x="923" y="647" width="1" height="3" fill="#00ff00"/>
<rect x="925" y="647" width="1" height="3" fill="#00ff00"/>
<rect x="928" y="647" width="15" height="1" fill="#00ff00"/>
<rect x="928" y="649" width="15" height="1" fill="#00ff00"/>
<rect x="928" y="647" width="1" height="3" fill="#00ff00"/>
<rect x="942" y="647" width="1" height="3" fill="#00ff00"/>
<rect x="947" y="647" width="8" height="1" fill="#00ff00"/>
<rect x="947" y="649" width="8" height="1" fill="#00ff00"/>
<rect x="947" y="647" width="1" height="3" fill="#00ff00"/>
<rect x="954" y="647" width="1" height="3" fill="#00ff00"/>
<rect x="977" y="647" width="5" height="1" fill="#00ff00"/>
<rect x="977" y="649" width="5" height="1" fill="#00ff00"/>
<rect x="977" y="647" width="1" height="3" fill="#00ff00"/>
<rect x="981" y="647" width="1" height="3" fill="#00ff00"/>
<rect x="923" y="651" width="3" height="1" fill="#00ff00"/>
<rect x="923" y="653" width="3" height="1" fill="#00ff00"/>
<rect x="923" y="651" width="1" height="3" fill="#00ff00"/>
<rect x="925" y="651" width="1" height="3" fill="#00ff00"/>
<rect x="928" y="651" width="15" height="1" fill="#00ff00"/>
<rect x="928" y="653" width="15" height="1" fill="#00ff00"/>
<rect x="928" y="651" width="1" height="3" fill="#00ff00"/>
<rect x="942" y="651" width="1" height="3" fill="#00ff00"/>
<rect x="947" y="651" width="7" height="1" fill="#00ff00"/>
<rect x="947" y="653" width="7" height="1" fill="#00ff00"/>
<rect x="947" y="651" width="1" height="3" fill="#00ff00"/>
<rect x="953" y="651" width="1" height="3" fill="#00ff00"/>
<rect x="966" y="651" width="1" height="3" fill="#00ff00"/>
<rect x="967" y="651" width="1" height="3" fill="#00ff00"/>
<rect x="978" y="651" width="3" height="1" fill="#00ff00"/>
<rect x="978" y="653" width="3" height="1" fill="#00ff00"/>
<rect x="978" y="651" width="1" height="3" fill="#00ff00"/>
<rect x="980" y="651" width="1" height="3" fill="#00ff00"/>
<rect x="923" y="655" width="3" height="1" fill="#00ff00"/>
<rect x="923" y="657" width="3" height="1" fill="#00ff00"/>
<rect x="923" y="655" width="1" height="3" fill="#00ff00"/>
<rect x="925" y="655" width="1" height="3" fill="#00ff00"/>
<rect x="928" y="655" width="13" height="1" fill="#00ff00"/>
<rect x="928" y="657" width="13" height="1" fill="#00ff00"/>
<rect x="928" y="655" width="1" height="3" fill="#00ff00"/>
<rect x="940" y="655" width="1" height="3" fill="#00ff00"/>
<rect x="947" y="655" width="4" height="1" fill="#00ff00"/>
<rect x="947" y="657" width="4" height="1" fill="#00ff00"/>
<rect x="947" y="655" width="1" height="3" fill="#00ff00"/>
<rect x="950" y="655" width="1" height="3" fill="#00ff00"/>
<rect x="976" y="655" width="6" height="1" fill="#00ff00"/>
<rect x="976" y="657" width="6" height="1" fill="#00ff00"/>
<rect x="976" y="655" width="1" height="3" fill="#00ff00"/>
<rect x="981" y="655" width="1" height="3" fill="#00ff00"/>
<rect x="923" y="659" width="3" height="1" fill="#00ff00"/>
<rect x="923" y="661" width="3" height="1" fill="#00ff00"/>
<rect x="923" y="659" width="1" height="3" fill="#00ff00"/>
<rect x="925" y="659" width="1" height="3" fill="#00ff00"/>
<rect x="928" y="659" width="17" height="1" fill="#00ff00"/>
<rect x="928" y="661" width="17" height="1" fill="#00ff00"/>
<rect x="928" y="659" width="1" height="3" fill="#00ff00"/>
<rect x="944" y="659" width="1" height="3" fill="#00ff00"/>
<rect x="947" y="659" width="7" height="1" fill="#00ff00"/>
<rect x="947" y="661" width="7" height="1" fill="#00ff00"/>
<rect x="947" y="659" width="1" height="3" fill="#00ff00"/>
<rect x="953" y="659" width="1" height="3" fill="#00ff00"/>
<rect x="977" y="659" width="5" height="1" fill="#00ff00"/>
<rect x="977" y="661" width="5" height="1" fill="#00ff00"/>
<rect x="977" y="659" width="1" height="3" fill="#00ff00"/>
<rect x="981" y="659" width="1" height="3" fill="#00ff00"/>
<rect x="923" y="663" width="3" height="1" fill="#00ff00"/>
<rect x="923" y="665" width="3" height="1" fill="#00ff00"/>
<rect x="923" y="663" width="1" height="3" fill="#00ff00"/>
<rect x="925" y="663" width="1" height="3" fill="#00ff00"/>
<rect x="928" y="663" width="11" height="1" fill="#00ff00"/>
<rect x="928" y="665" width="11" height="1" fill="#00ff00"/>
<rect x="928" y="663" width="1" height="3" fill="#00ff00"/>
<rect x="938" y="663" width="1" height="3" fill="#00ff00"/>
<rect x="947" y="663" width="4" height="1" fill="#00ff00"/>
<rect x="947" y="665" width="4" height="1" fill="#00ff00"/>
<rect x="947" y="663" width="1" height="3" fill="#00ff00"/>
<rect x="950" y="663" width="1" height="3" fill="#00ff00"/>
<rect x="978" y="663" width="3" height="1" fill="#00ff00"/>
<rect x="978" y="665" width="3" height="1" fill="#00ff00"/>
<rect x="978" y="663" width="1" height="3" fill="#00ff00"/>
<rect x="980" y="663" width="1" height="3" fill="#00ff00"/>
<rect x="923" y="667" width="3" height="1" fill="#00ff00"/>
<rect x="923" y="669" width="3" height="1" fill="#00ff00"/>
<rect x="923" y="667" width="1" height="3" fill="#00ff00"/>
<rect x="925" y="667" width="1" height="3" fill="#00ff00"/>
<rect x="928" y="667" width="15" height="1" fill="#00ff00"/>
<rect x="928" y="669" width="15" height="1" fill="#00ff00"/>
<rect x="928" y="667" width="1" height="3" fill="#00ff00"/>
<rect x="942" y="667" width="1" height="3" fill="#00ff00"/>
<rect x="947" y="667" width="5" height="1" fill="#00ff00"/>
<rect x="947" y="669" width="5" height="1" fill="#00ff00"/>
<rect x="947" y="667" width="1" height="3" fill="#00ff00"/>
<rect x="951" y="667" width="1" height="3" fill="#00ff00"/>
<rect x="977" y="667" width="5" height="1" fill="#00ff00"/>
<rect x="977" y="669" width="5" height="1" fill="#00ff00"/>
<rect x="977" y="667" width="1" height="3" fill="#00ff00"/>
<rect x="981" y="667" width="1" height="3" fill="#00ff00"/>
<rect x="923" y="671" width="3" height="1" fill="#00ff00"/>
<rect x="923" y="673" width="3" height="1" fill="#00ff00"/>
<rect x="923" y="671" width="1" height="3" fill="#00ff00"/>
<rect x="925" y="671" width="1" height="3" fill="#00ff00"/>
<rect x="928" y="671" width="9" height="1" fill="#00ff00"/>
<rect x="928" y="673" width="9" height="1" fill="#00ff00"/>
<rect x="928" y="671" width="1" height="3" fill="#00ff00"/>
<rect x="936" y="671" width="1" height="3" fill="#00ff00"/>
<rect x="947" y="671" width="10" height="1" fill="#00ff00"/>
<rect x="947" y="673" width="10" height="1" fill="#00ff00"/>
<rect x="947" y="671" width="1" height="3" fill="#00ff00"/>
<rect x="956" y="671" width="1" height="3" fill="#00ff00"/>
<rect x="966" y="671" width="1" height="3" fill="#00ff00"/>
<rect x="967" y="671" width="1" height="3" fill="#00ff00"/>
<rect x="976" y="671" width="6" height="1" fill="#00ff00"/>
<rect x="976" y="673" width="6" height="1" fill="#00ff00"/>
<rect x="976" y="671" width="1" height="3" fill="#00ff00"/>
<rect x="981" y="671" width="1" height="3" fill="#00ff00"/>
<rect x="923" y="675" width="3" height="1" fill="#00ff00"/>
<rect x="923" y="677" width="3" height="1" fill="#00ff00"/>
<rect x="923" y="675" width="1" height="3" fill="#00ff00"/>
<rect x="925" y="675" width="1" height="3" fill="#00ff00"/>
<rect x="928" y="675" width="15" height="1" fill="#00ff00"/>
<rect x="928" y="677" width="15" height="1" fill="#00ff00"/>
<rect x="928" y="675" width="1" height="3" fill="#00ff00"/>
<rect x="942" y="675" width="1" height="3" fill="#00ff00"/>
<rect x="947" y="675" width="7" height="1" fill="#00ff00"/>
<rect x="947" y="677" width="7" height="1" fill="#00ff00"/>
<rect x="947" y="675" width="1" height="3" fill="#00ff00"/>
<rect x="953" y="675" width="1" height="3" fill="#00ff00"/>
<rect x="976" y="675" width="6" height="1" fill="#00ff00"/>
<rect x="976" y="677" width="6" height="1" fill="#00ff00"/>
<rect x="976" y="675" width="1" height="3" fill="#00ff00"/>
<rect x="981" y="675" width="1" height="3" fill="#00ff00"/>
<rect x="923" y="679" width="3" height="1" fill="#00ff00"/>
<rect x="923" y="681" width="3" height="1" fill="#00ff00"/>
<rect x="923" y="679" width="1" height="3" fill="#00ff00"/>
<rect x="925" y="679" width="1" height="3" fill="#00ff00"/>
<rect x="928" y="679" width="17" height="1" fill="#00ff00"/>
<rect x="928" y="681" width="17" height="1" fill="#00ff00"/>
<rect x="928" y="679" width="1" height="3" fill="#00ff00"/>
<rect x="944" y="679" width="1" height="3" fill="#00ff00"/>
<rect x="947" y="679" width="9" height="1" fill="#00ff00"/>
<rect x="947" y="681" width="9" height="1" fill="#00ff00"/>
<rect x="947" y="679" width="1" height="3" fill="#00ff00"/>
<rect x="955" y="679" width="1" height="3" fill="#00ff00"/>
<rect x="923" y="683" width="3" height="1" fill="#00ff00"/>
<rect x="923" y="685" width="3" height="1" fill="#00ff00"/>
<rect x="923" y="683" width="1" height="3" fill="#00ff00"/>
<rect x="925" y="683" width="1" height="3" fill="#00ff00"/>
<rect x="928" y="683" width="11" height="1" fill="#00ff00"/>
<rect x="928" y="685" width="11" height="1" fill="#00ff00"/>
<rect x="928" y="683" width="1" height="3" fill="#00ff00"/>
<rect x="938" y="683" width="1" height="3" fill="#00ff00"/>
<rect x="947" y="683" width="7" height="1" fill="#00ff00"/>
<rect x="947" y="685" width="7" height="1" fill="#00ff00"/>
<rect x="947" y="683" width="1" height="3" fill="#00ff00"/>
<rect x="953" y="683" width="1" height="3" fill="#00ff00"/>
<rect x="966" y="683" width="1" height="3" fill="#00ff00"/>
<rect x="967" y="683" width="1" height="3" fill="#00ff00"/>
<rect x="976" y="683" width="7" height="1" fill="#00ff00"/>
<rect x="976" y="685" width="7" height="1" fill="#00ff00"/>
<rect x="976" y="683" width="1" height="3" fill="#00ff00"/>
<rect x="982" y="683" width="1" height="3" fill="#00ff00"/>
<rect x="923" y="687" width="3" height="1" fill="#00ff00"/>
<rect x="923" y="689" width="3" height="1" fill="#00ff00"/>
<rect x="923" y="687" width="1" height="3" fill="#00ff00"/>
<rect x="925" y="687" width="1" height="3" fill="#00ff00"/>
<rect x="928" y="687" width="11" height="1" fill="#00ff00"/>
<rect x="928" y="689" width="11" height="1" fill="#00ff00"/>
<rect x="928" y="687" width="1" height="3" fill="#00ff00"/>
<rect x="938" y="687" width="1" height="3" fill="#00ff00"/>
<rect x="947" y="687" width="4" height="1" fill="#00ff00"/>
<rect x="947" y="689" width="4" height="1" fill="#00ff00"/>
<rect x="947" y="687" width="1" height="3" fill="#00ff00"/>
<rect x="950" y="687" width="1" height="3" fill="#00ff00"/>
<rect x="977" y="687" width="5" height="1" fill="#00ff00"/>
<rect x="977" y="689" width="5" height="1" fill="#00ff00"/>
<rect x="977" y="687" width="1" height="3" fill="#00ff00"/>
<rect x="981" y="687" width="1" height="3" fill="#00ff00"/>
<rect x="923" y="691" width="3" height="1" fill="#00ff00"/>
<rect x="923" y="693" width="3" height="1" fill="#00ff00"/>
<rect x="923" y="691" width="1" height="3" fill="#00ff00"/>
<rect x="925" y="691" width="1" height="3" fill="#00ff00"/>
<rect x="928" y="691" width="17" height="1" fill="#00ff00"/>
<rect x="928" y="693" width="17" height="1" fill="#00ff00"/>
<rect x="928" y="691" width="1" height="3" fill="#00ff00"/>
<rect x="944" y="691" width="1" height="3" fill="#00ff00"/>
<rect x="947" y="691" width="7" height="1" fill="#00ff00"/>
<rect x="947" y="693" width="7" height="1" fill="#00ff00"/>
<rect x="947" y="691" width="1" height="3" fill="#00ff00"/>
<rect x="953" y="691" width="1" height="3" fill="#00ff00"/>
<rect x="976" y="691" width="7" height="1" fill="#00ff00"/>
<rect x="976" y="693" width="7" height="1" fill="#00ff00"/>
<rect x="976" y="691" width="1" height="3" fill="#00ff00"/>
<rect x="982" y="691" width="1" height="3" fill="#00ff00"/>
<rect x="923" y="695" width="3" height="1" fill="#00ff00"/>
<rect x="923" y="697" width="3" height="1" fill="#00ff00"/>
<rect x="923" y="695" width="1" height="3" fill="#00ff00"/>
<rect x="925" y="695" width="1" height="3" fill="#00ff00"/>
<rect x="928" y="695" width="15" height="1" fill="#00ff00"/>
<rect x="928" y="697" width="15" height="1" fill="#00ff00"/>
<rect x="928" y="695" width="1" height="3" fill="#00ff00"/>
<rect x="942" y="695" width="1" height="3" fill="#00ff00"/>
<rect x="947" y="695" width="4" height="1" fill="#00ff00"/>
<rect x="947" y="697" width="4" height="1" fill="#00ff00"/>
<rect x="947" y="695" width="1" height="3" fill="#00ff00"/>
<rect x="950" y="695" width="1" height="3" fill="#00ff00"/>
<rect x="977" y="695" width="5" height="1" fill="#00ff00"/>
<rect x="977" y="697" width="5" height="1" fill="#00ff00"/>
<rect x="977" y="695" width="1" height="3" fill="#00ff00"/>
<rect x="981" y="695" width="1" height="3" fill="#00ff00"/>
<rect x="923" y="699" width="3" height="1" fill="#00ff00"/>
<rect x="923" y="701" width="3" height="1" fill="#00ff00"/>
<rect x="923" y="699" width="1" height="3" fill="#00ff00"/>
<rect x="925" y="699" width="1" height="3" fill="#00ff00"/>
<rect x="928" y="699" width="12" height="1" fill="#00ff00"/>
<rect x="928" y="701" width="12" height="1" fill="#00ff00"/>
<rect x="928" y="699" width="1" height="3" fill="#00ff00"/>
<rect x="939" y="699" width="1" height="3" fill="#00ff00"/>
<rect x="947" y="699" width="9" height="1" fill="#00ff00"/>
<rect x="947" y="701" width="9" height="1" fill="#00ff00"/>
<rect x="947" y="699" width="1" height="3" fill="#00ff00"/>
<rect x="955" y="699" width="1" height="3" fill="#00ff00"/>
<rect x="966" y="699" width="1" height="3" fill="#00ff00"/>
<rect x="967" y="699" width="1" height="3" fill="#00ff00"/>
<rect x="923" y="703" width="3" height="1" fill="#00ff00"/>
<rect x="923" y="705" width="3" height="1" fill="#00ff00"/>
<rect x="923" y="703" width="1" height="3" fill="#00ff00"/>
<rect x="925" y="703" width="1" height="3" fill="#00ff00"/>
<rect x="928" y="703" width="13" height="1" fill="#00ff00"/>
<rect x="928" y="705" width="13" height="1" fill="#00ff00"/>
<rect x="928" y="703" width="1" height="3" fill="#00ff00"/>
<rect x="940" y="703" width="1" height="3" fill="#00ff00"/>
<rect x="947" y="703" width="12" height="1" fill="#00ff00"/>
<rect x="947" y="705" width="12" height="1" fill="#00ff00"/>
<rect x="947" y="703" width="1" height="3" fill="#00ff00"/>
<rect x="958" y="703" width="1" height="3" fill="#00ff00"/>
<rect x="966" y="703" width="1" height="3" fill="#00ff00"/>
<rect x="967" y="703" width="1" height="3" fill="#00ff00"/>
<rect x="976" y="703" width="7" height="1" fill="#00ff00"/>
<rect x="976" y="705" width="7" height="1" fill="#00ff00"/>
<rect x="976" y="703" width="1" height="3" fill="#00ff00"/>
<rect x="982" y="703" width="1" height="3" fill="#00ff00"/>
<rect x="923" y="707" width="3" height="1" fill="#00ff00"/>
<rect x="923" y="709" width="3" height="1" fill="#00ff00"/>
<rect x="923" y="707" width="1" height="3" fill="#00ff00"/>
<rect x="925" y="707" width="1" height="3" fill="#00ff00"/>
<rect x="928" y="707" width="13" height="1" fill="#00ff00"/>
<rect x="928" y="709" width="13" height="1" fill="#00ff00"/>
<rect x="928" y="707" width="1" height="3" fill="#00ff00"/>
<rect x="940" y="707" width="1" height="3" fill="#00ff00"/>
<rect x="947" y="707" width="8" height="1" fill="#00ff00"/>
<rect x="947" y="709" width="8" height="1" fill="#00ff00"/>
<rect x="947" y="707" width="1" height="3" fill="#00ff00"/>
<rect x="954" y="707" width="1" height="3" fill="#00ff00"/>
<rect x="966" y="707" width="1" height="3" fill="#00ff00"/>
<rect x="967" y="707" width="1" height="3" fill="#00ff00"/>
<rect x="975" y="707" width="8" height="1" fill="#00ff00"/>
<rect x="975" y="709" width="8" height="1" fill="#00ff00"/>
<rect x="975" y="707" width="1" height="3" fill="#00ff00"/>
<rect x="982" y="707" width="1" height="3" fill="#00ff00"/>
<rect x="923" y="711" width="3" height="1" fill="#00ff00"/>
<rect x="923" y="713" width="3" height="1" fill="#00ff00"/>
<rect x="923" y="711" width="1" height="3" fill="#00ff00"/>
<rect x="925" y="711" width="1" height="3" fill="#00ff00"/>
<rect x="928" y="711" width="17" height="1" fill="#00ff00"/>
<rect x="928" y="713" width="17" height="1" fill="#00ff00"/>
<rect x="928" y="711" width="1" height="3" fill="#00ff00"/>
<rect x="944" y="711" width="1" height="3" fill="#00ff00"/>
<rect x="947" y="711" width="4" height="1" fill="#00ff00"/>
<rect x="947" y="713" width="4" height="1" fill="#00ff00"/>
<rect x="947" y="711" width="1" height="3" fill="#00ff00"/>
<rect x="950" y="711" width="1" height="3" fill="#00ff00"/>
<rect x="966" y="711" width="1" height="3" fill="#00ff00"/>
<rect x="967" y="711" width="1" height="3" fill="#00ff00"/>
<rect x="977" y="711" width="5" height="1" fill="#00ff00"/>
<rect x="977" y="713" width="5" height="1" fill="#00ff00"/>
<rect x="977" y="711" width="1" height="3" fill="#00ff00"/>
<rect x="981" y="711" width="1" height="3" fill="#00ff00"/>
<rect x="923" y="715" width="3" height="1" fill="#00ff00"/>
<rect x="923" y="717" width="3" height="1" fill="#00ff00"/>
<rect x="923" y="715" width="1" height="3" fill="#00ff00"/>
<rect x="925" y="715" width="1" height="3" fill="#00ff00"/>
<rect x="928" y="715" width="14" height="1" fill="#00ff00"/>
<rect x="928" y="717" width="14" height="1" fill="#00ff00"/>
<rect x="928" y="715" width="1" height="3" fill="#00ff00"/>
<rect x="941" y="715" width="1" height="3" fill="#00ff00"/>
<rect x="947" y="715" width="5" height="1" fill="#00ff00"/>
<rect x="947" y="717" width="5" height="1" fill="#00ff00"/>
<rect x="947" y="715" width="1" height="3" fill="#00ff00"/>
<rect x="951" y="715" width="1" height="3" fill="#00ff00"/>
<rect x="975" y="715" width="8" height="1" fill="#00ff00"/>
<rect x="975" y="717" width="8" height="1" fill="#00ff00"/>
<rect x="975" y="715" width="1" height="3" fill="#00ff00"/>
<rect x="982" y="715" width="1" height="3" fill="#00ff00"/>
<rect x="923" y="719" width="3" height="1" fill="#00ff00"/>
<rect x="923" y="721" width="3" height="1" fill="#00ff00"/>
<rect x="923" y="719" width="1" height="3" fill="#00ff00"/>
<rect x="925" y="719" width="1" height="3" fill="#00ff00"/>
<rect x="928" y="719" width="14" height="1" fill="#00ff00"/>
<rect x="928" y="721" width="14" height="1" fill="#00ff00"/>
<rect x="928" y="719" width="1" height="3" fill="#00ff00"/>
<rect x="941" y="719" width="1" height="3" fill="#00ff00"/>
<rect x="947" y="719" width="10" height="1" fill="#00ff00"/>
<rect x="947" y="721" width="10" height="1" fill="#00ff00"/>
<rect x="947" y="719" width="1" height="3" fill="#00ff00"/>
<rect x="956" y="719" width="1" height="3" fill="#00ff00"/>
<rect x="966" y="719" width="1" height="3" fill="#00ff00"/>
<rect x="967" y="719" width="1" height="3" fill="#00ff00"/>
<rect x="977" y="719" width="5" height="1" fill="#00ff00"/>
<rect x="977" y="721" width="5" height="1" fill="#00ff00"/>
<rect x="977" y="719" width="1" height="3" fill="#00ff00"/>
<rect x="981" y="719" width="1" height="3" fill="#00ff00"/>
<rect x="923" y="723" width="3" height="1" fill="#00ff00"/>
<rect x="923" y="725" width="3" height="1" fill="#00ff00"/>
<rect x="923" y="723" width="1" height="3" fill="#00ff00"/>
<rect x="925" y="723" width="1" height="3" fill="#00ff00"/>
<rect x="928" y="723" width="16" height="1" fill="#00ff00"/>
<rect x="928" y="725" width="16" height="1" fill="#00ff00"/>
<rect x="928" y="723" width="1" height="3" fill="#00ff00"/>
<rect x="943" y="723" width="1" height="3" fill="#00ff00"/>
<rect x="947" y="723" width="5" height="1" fill="#00ff00"/>
<rect x="947" y="725" width="5" height="1" fill="#00ff00"/>
<rect x="947" y="723" width="1" height="3" fill="#00ff00"/>
<rect x="951" y="723" width="1" height="3" fill="#00ff00"/>
<rect x="966" y="723" width="1" height="3" fill="#00ff00"/>
<rect x="967" y="723" width="1" height="3" fill="#00ff00"/>
<rect x="978" y="723" width="3" height="1" fill="#00ff00"/>
<rect x="978" y="725" width="3" height="1" fill="#00ff00"/>
<rect x="978" y="723" width="1" height="3" fill="#00ff00"/>
<rect x="980" y="723" width="1" height="3" fill="#00ff00"/>
<rect x="923" y="727" width="3" height="1" fill="#00ff00"/>
<rect x="923" y="729" width="3" height="1" fill="#00ff00"/>
<rect x="923" y="727" width="1" height="3" fill="#00ff00"/>
<rect x="925" y="727" width="1" height="3" fill="#00ff00"/>
<rect x="928" y="727" width="12" height="1" fill="#00ff00"/>
<rect x="928" y="729" width="12" height="1" fill="#00ff00"/>
<rect x="928" y="727" width="1" height="3" fill="#00ff00"/>
<rect x="939" y="727" width="1" height="3" fill="#00ff00"/>
<rect x="947" y="727" width="5" height="1" fill="#00ff00"/>
<rect x="947" y="729" width="5" height="1" fill="#00ff00"/>
<rect x="947" y="727" width="1" height="3" fill="#00ff00"/>
<rect x="951" y="727" width="1" height="3" fill="#00ff00"/>
<rect x="923" y="731" width="3" height="1" fill="#00ff00"/>
<rect x="923" y="733" width="3" height="1" fill="#00ff00"/>
<rect x="923" y="731" width="1" height="3" fill="#00ff00"/>
<rect x="925" y="731" width="1" height="3" fill="#00ff00"/>
<rect x="928" y="731" width="17" height="1" fill="#00ff00"/>
<rect x="928" y="733" width="17" height="1" fill="#00ff00"/>
<rect x="928" y="731" width="1" height="3" fill="#00ff00"/>
<rect x="944" y="731" width="1" height="3" fill="#00ff00"/>
<rect x="947" y="731" width="12" height="1" fill="#00ff00"/>
<rect x="947" y="733" width="12" height="1" fill="#00ff00"/>
<rect x="947" y="731" width="1" height="3" fill="#00ff00"/>
<rect x="958" y="731" width="1" height="3" fill="#00ff00"/>
<rect x="977" y="731" width="5" height="1" fill="#00ff00"/>
<rect x="977" y="733" width="5" height="1" fill="#00ff00"/>
<rect x="977" y="731" width="1" height="3" fill="#00ff00"/>
<rect x="981" y="731" width="1" height="3" fill="#00ff00"/>
<rect x="923" y="735" width="3" height="1" fill="#00ff00"/>
<rect x="923" y="737" width="3" height="1" fill="#00ff00"/>
<rect x="923" y="735" width="1" height="3" fill="#00ff00"/>
<rect x="925" y="735" width="1" height="3" fill="#00ff00"/>
<rect x="928" y="735" width="14" height="1" fill="#00ff00"/>
<rect x="928" y="737" width="14" height="1" fill="#00ff00"/>
<rect x="928" y="735" width="1" height="3" fill="#00ff00"/>
<rect x="941" y="735" width="1" height="3" fill="#00ff00"/>
<rect x="947" y="735" width="4" height="1" fill="#00ff00"/>
<rect x="947" y="737" width="4" height="1" fill="#00ff00"/>
<rect x="947" y="735" width="1" height="3" fill="#00ff00"/>
<rect x="950" y="735" width="1" height="3" fill="#00ff00"/>
<rect x="966" y="735" width="1" height="3" fill="#00ff00"/>
<rect x="967" y="735" width="1" height="3" fill="#00ff00"/>
<rect x="976" y="735" width="6" height="1" fill="#00ff00"/>
<rect x="976" y="737" width="6" height="1" fill="#00ff00"/>
<rect x="976" y="735" width="1" height="3" fill="#00ff00"/>
<rect x="981" y="735" width="1" height="3" fill="#00ff00"/>
<rect x="923" y="739" width="3" height="1" fill="#00ff00"/>
<rect x="923" y="741" width="3" height="1" fill="#00ff00"/>
<rect x="923" y="739" width="1" height="3" fill="#00ff00"/>
<rect x="925" y="739" width="1" height="3" fill="#00ff00"/>
<rect x="928" y="739" width="15" height="1" fill="#00ff00"/>
<rect x="928" y="741" width="15" height="1" fill="#00ff00"/>
<rect x="928" y="739" width="1" height="3" fill="#00ff00"/>
<rect x="942" y="739" width="1" height="3" fill="#00ff00"/>
<rect x="947" y="739" width="9" height="1" fill="#00ff00"/>
<rect x="947" y="741" width="9" height="1" fill="#00ff00"/>
<rect x="947" y="739" width="1" height="3" fill="#00ff00"/>
<rect x="955" y="739" width="1" height="3" fill="#00ff00"/>
<rect x="978" y="739" width="3" height="1" fill="#00ff00"/>
<rect x="978" y="741" width="3" height="1" fill="#00ff00"/>
<rect x="978" y="739" width="1" height="3" fill="#00ff00"/>
<rect x="980" y="739" width="1" height="3" fill="#00ff00"/>
<rect x="923" y="743" width="3" height="1" fill="#00ff00"/>
<rect x="923" y="745" width="3" height="1" fill="#00ff00"/>
<rect x="923" y="743" width="1" height="3" fill="#00ff00"/>
<rect x="925" y="743" width="1" height="3" fill="#00ff00"/>
<rect x="928" y="743" width="9" height="1" fill="#00ff00"/>
<rect x="928" y="745" width="9" height="1" fill="#00ff00"/>
<rect x="928" y="743" width="1" height="3" fill="#00ff00"/>
<rect x="936" y="743" width="1" height="3" fill="#00ff00"/>
<rect x="947" y="743" width="8" height="1" fill="#00ff00"/>
<rect x="947" y="745" width="8" height="1" fill="#00ff00"/>
<rect x="947" y="743" width="1" height="3" fill="#00ff00"/>
<rect x="954" y="743" width="1" height="3" fill="#00ff00"/>
<rect x="975" y="743" width="8" height="1" fill="#00ff00"/>
<rect x="975" y="745" width="8" height="1" fill="#00ff00"/>
<rect x="975" y="743" width="1" height="3" fill="#00ff00"/>
<rect x="982" y="743" width="1" height="3" fill="#00ff00"/>
<rect x="919" y="748" width="98" height="28" fill="#ffffff"/>
<rect x="954" y="752" width="28" height="10" fill="#000"/>
<rect x="954" y="765" width="28" height="9" fill="#000"/>
<rect x="985" y="752" width="30" height="5" fill="#000"/>
<rect x="985" y="760" width="30" height="5" fill="#000"/>
<rect x="985" y="768" width="30" height="5" fill="#000"/>
<rect x="993" y="760" width="1" height="5" fill="#00ff00"/>
<rect x="1013" y="760" width="1" height="5" fill="#00ff00"/>
<rect x="992" y="768" width="1" height="5" fill="#00ff00"/>
<rect x="1005" y="768" width="1" height="5" fill="#00ff00"/>
<rect x="923" y="751" width="5" height="10" fill="#000"/>
<rect x="923" y="766" width="5" height="8" fill="#000"/>
<rect x="923" y="753" width="5" height="1" fill="#00ffff"/>
<rect x="923" y="755" width="5" height="1" fill="#00ffff"/>
<rect x="923" y="757" width="5" height="1" fill="#00ffff"/>
<rect x="923" y="759" width="5" height="1" fill="#00ffff"/>
<rect x="923" y="768" width="5" height="1" fill="#00ffff"/>
<rect x="923" y="770" width="5" height="1" fill="#00ffff"/>
<rect x="923" y="772" width="5" height="1" fill="#00ffff"/>
<rect x="930" y="751" width="8" height="10" fill="#000"/>
<rect x="930" y="766" width="8" height="8" fill="#000"/>
<rect x="930" y="753" width="8" height="1" fill="#00ffff"/>
<rect x="930" y="755" width="8" height="1" fill="#00ffff"/>
<rect x="930" y="757" width="8" height="1" fill="#00ffff"/>
<rect x="930" y="759" width="8" height="1" fill="#00ffff"/>
<rect x="930" y="768" width="8" height="1" fill="#00ffff"/>
<rect x="930" y="770" width="8" height="1" fill="#00ffff"/>
<rect x="930" y="772" width="8" height="1" fill="#00ffff"/>
<rect x="941" y="751" width="5" height="10" fill="#000"/>
<rect x="941" y="766" width="5" height="8" fill="#000"/>
<rect x="941" y="753" width="5" height="1" fill="#00ffff"/>
<rect x="941" y="755" width="5" height="1" fill="#00ffff"/>
<rect x="941" y="757" width="5" height="1" fill="#00ffff"/>
<rect x="941" y="759" width="5" height="1" fill="#00ffff"/>
<rect x="941" y="768" width="5" height="1" fill="#00ffff"/>
<rect x="941" y="770" width="5" height="1" fill="#00ffff"/>
<rect x="941" y="772" width="5" height="1" fill="#00ffff"/>
<rect x="949" y="751" width="3" height="10" fill="#000"/>
<rect x="949" y="766" width="3" height="8" fill="#000"/>
<rect x="949" y="753" width="3" height="1" fill="#00ffff"/>
<rect x="949" y="755" width="3" height="1" fill="#00ffff"/>
<rect x="949" y="757" width="3" height="1" fill="#00ffff"/>
<rect x="949" y="759" width="3" height="1" fill="#00ffff"/>
<rect x="949" y="768" width="3" height="1" fill="#00ffff"/>
<rect x="949" y="770" width="3" height="1" fill="#00ffff"/>
<rect x="949" y="772" width="3" height="1" fill="#00ffff"/>
<rect x="922" y="761" width="7" height="1" fill="#00ff00"/>
<rect x="922" y="763" width="7" height="1" fill="#00ff00"/>
<rect x="922" y="761" width="1" height="3" fill="#00ff00"/>
<rect x="928" y="761" width="1" height="3" fill="#00ff00"/>
<rect x="939" y="761" width="6" height="1" fill="#00ff00"/>
<rect x="939" y="763" width="6" height="1" fill="#00ff00"/>
<rect x="939" y="761" width="1" height="3" fill="#00ff00"/>
<rect x="944" y="761" width="1" height="3" fill="#00ff00"/>
<rect x="948" y="761" width="5" height="1" fill="#00ff00"/>
<rect x="948" y="763" width="5" height="1" fill="#00ff00"/>
<rect x="948" y="761" width="1" height="3" fill="#00ff00"/>
<rect x="952" y="761" width="1" height="3" fill="#00ff00"/>
<rect x="923" y="771" width="6" height="1" fill="#00ff00"/>
<rect x="923" y="773" width="6" height="1" fill="#00ff00"/>
<rect x="923" y="771" width="1" height="3" fill="#00ff00"/>
<rect x="928" y="771" width="1" height="3" fill="#00ff00"/>
<rect x="931" y="771" width="6" height="1" fill="#00ff00"/>
<rect x="931" y="773" width="6" height="1" fill="#00ff00"/>
<rect x="931" y="771" width="1" height="3" fill="#00ff00"/>
<rect x="936" y="771" width="1" height="3" fill="#00ff00"/>
<rect x="941" y="771" width="6" height="1" fill="#00ff00"/>
<rect x="941" y="773" width="6" height="1" fill="#00ff00"/>
<rect x="941" y="771" width="1" height="3" fill="#00ff00"/>
<rect x="946" y="771" width="1" height="3" fill="#00ff00"/>
<rect x="955" y="766" width="9" height="1" fill="#00ff00"/>
<rect x="955" y="768" width="9" height="1" fill="#00ff00"/>
<rect x="955" y="766" width="1" height="3" fill="#00ff00"/>
<rect x="963" y="766" width="1" height="3" fill="#00ff00"/>
<rect x="969" y="766" width="8" height="1" fill="#00ff00"/>
<rect x="969" y="768" width="8" height="1" fill="#00ff00"/>
<rect x="969" y="766" width="1" height="3" fill="#00ff00"/>
<rect x="976" y="766" width="1" height="3" fill="#00ff00"/>
<rect x="956" y="771" width="9" height="1" fill="#00ff00"/>
<rect x="956" y="773" width="9" height="1" fill="#00ff00"/>
<rect x="956" y="771" width="1" height="3" fill="#00ff00"/>
<rect x="964" y="771" width="1" height="3" fill="#00ff00"/>
<rect x="970" y="771" width="8" height="1" fill="#00ff00"/>
<rect x="970" y="773" width="8" height="1" fill="#00ff00"/>
<rect x="970" y="771" width="1" height="3" fill="#00ff00"/>
<rect x="977" y="771" width="1" height="3" fill="#00ff00"/>
<rect x="923" y="745" width="3" height="1" fill="#00ff00"/>
<rect x="923" y="747" width="3" height="1" fill="#00ff00"/>
<rect x="923" y="745" width="1" height="3" fill="#00ff00"/>
<rect x="925" y="745" width="1" height="3" fill="#00ff00"/>
<rect x="928" y="745" width="12" height="1" fill="#00ff00"/>
<rect x="928" y="747" width="12" height="1" fill="#00ff00"/>
<rect x="928" y="745" width="1" height="3" fill="#00ff00"/>
<rect x="939" y="745" width="1" height="3" fill="#00ff00"/>
<rect x="947" y="745" width="9" height="1" fill="#00ff00"/>
<rect x="947" y="747" width="9" height="1" fill="#00ff00"/>
<rect x="947" y="745" width="1" height="3" fill="#00ff00"/>
<rect x="955" y="745" width="1" height="3" fill="#00ff00"/>
<rect x="966" y="745" width="2" height="1" fill="#00ff00"/>
<rect x="966" y="747" width="2" height="1" fill="#00ff00"/>
<rect x="966" y="745" width="1" height="3" fill="#00ff00"/>
<rect x="967" y="745" width="1" height="3" fill="#00ff00"/>
<rect x="975" y="745" width="8" height="1" fill="#00ff00"/>
<rect x="975" y="747" width="8" height="1" fill="#00ff00"/>
<rect x="975" y="745" width="1" height="3" fill="#00ff00"/>
<rect x="982" y="745" width="1" height="3" fill="#00ff00"/>
<rect x="990" y="745" width="5" height="1" fill="#00ff00"/>
<rect x="990" y="747" width="5" height="1" fill="#00ff00"/>
<rect x="990" y="745" width="1" height="3" fill="#00ff00"/>
<rect x="994" y="745" width="1" height="3" fill="#00ff00"/>
<rect x="1002" y="745" width="10" height="1" fill="#00ff00"/>
<rect x="1002" y="747" width="10" height="1" fill="#00ff00"/>
<rect x="1002" y="745" width="1" height="3" fill="#00ff00"/>
<rect x="1011" y="745" width="1" height="3" fill="#00ff00"/>
<line x1="1015" y1="748" x2="1020" y2="748" stroke="#00ffff" stroke-width="1" />
</svg>
<!--/DRAWING-->

<!-- doc tabs -->
<svg class="a" style="left:0;top:155px" width="1339" height="23" viewBox="0 155 1339 23">
 <rect x="0" y="155" width="1339" height="1" fill="#d6d6d6"/>
 <g fill="#efefef" stroke="#b8b8b8" stroke-width="1">
  <path d="M25,178.5 L45.5,158.5 H155 L157.5,161 V178.5"/>
  <path d="M157.5,178.5 V161 L160,158.5 H269 L271.5,161 V178.5"/>
  <path d="M271.5,178.5 V161 L274,158.5 H398 L400.5,161 V178.5"/>
  <path d="M400.5,178.5 V161 L403,158.5 H555 L557.5,161 V178.5"/>
  <path d="M557.5,178.5 V161 L560,158.5 H727.5 L713,178.5"/>
 </g>
 <path d="M25.5,178 L45.5,158.5" stroke="#8a8a8a" stroke-dasharray="1.2 0.8"/>
 <path d="M713,178.5 L729.5,158.5 H861 L863.5,161 V178.5" fill="#f9f9f9" stroke="#b8b8b8"/>
 <path d="M713.5,178 L729.5,158.5" stroke="#8a8a8a" stroke-dasharray="1.2 0.8"/>
 <path d="M850,164 l7,7 M857,164 l-7,7" stroke="#555" stroke-width="1.5"/>
</svg>
<div class="a tab" style="left:59px;top:160.5px">总装图<span class="l">-A0.dwg</span></div>
<div class="a tab" style="left:174px;top:160.5px">小带轮<span class="l">-A3.dwg</span></div>
<div class="a tab" style="left:290px;top:160.5px">皮带轮罩<span class="l">-A2.dwg</span></div>
<div class="a tab" style="left:420px;top:160.5px">减速器输入轴<span class="l">-A3.dwg</span></div>
<div class="a tab" style="left:577px;top:160.5px">减速器低速齿轮<span class="l">-A2.dwg</span></div>
<div class="a tab" style="left:748px;top:160.5px;font-weight:bold;color:#222">减速器<span class="l">-A0.dwg</span></div>
<!-- left panel -->
<svg class="a" style="left:0;top:156px" width="25" height="60" viewBox="0 156 25 60">
 <rect x="0" y="163" width="1" height="42" fill="#c8c8c8"/>
 <rect x="5" y="163" width="15" height="16" fill="#e9e7d6"/>
 <path d="M5.5,172 v-2 a3,3 0 0 1 3,-3 h2" fill="none" stroke="#111" stroke-width="1.3"/>
 <path d="M10,164.5 l2.5,2.5 l-2.5,2.5z" fill="#111"/>
 <rect x="13.5" y="165" width="6" height="2" rx="1" fill="#fff" stroke="#222"/>
 <rect x="15.5" y="167" width="2" height="5" fill="#fff" stroke="#222" stroke-width="0.8"/>
 <rect x="5.5" y="174.5" width="13" height="4.5" rx="1.5" fill="#fff" stroke="#222"/>
 <path d="M7,176.8 h8" stroke="#555" stroke-dasharray="1.5 0.7"/>
</svg>
<div class="a" style="left:-1px;top:186px;width:26px;height:14px;font-size:12.5px;line-height:14px;color:#222;transform:rotate(90deg);text-align:center">图库</div>
<!-- bottom bar -->
<svg class="a" style="left:0;top:981px" width="260" height="18" viewBox="0 981 260 18">
 <g fill="#555">
  <rect x="28" y="987" width="1" height="7"/><path d="M34,987 v7 l-4,-3.5z"/>
  <path d="M49,987 v7 l-4,-3.5z"/>
  <path d="M62,987 v7 l4,-3.5z"/>
  <path d="M76,987 v7 l4,-3.5z"/><rect x="81" y="987" width="1" height="7"/>
 </g>
 <path d="M89.5,981 L97.5,997.5 H130.5 L137,981" fill="#fff" stroke="#a8a8a8"/>
 <path d="M137,981 L133,988 L139,997.5 H176 L184.5,981" fill="#ececec" stroke="#a8a8a8"/>
 <path d="M184.5,981 L180,988 L187,997.5 H225 L234,981" fill="#ececec" stroke="#a8a8a8"/>
</svg>
<div class="a" style="left:99px;top:982px;font-size:13px;line-height:15px;font-weight:bold;color:#222">模型</div>
<div class="a" style="left:142px;top:982px;font-size:13px;line-height:15px;color:#333">布局1</div>
<div class="a" style="left:190px;top:982px;font-size:13px;line-height:15px;color:#333">布局2</div>
</body></html>
